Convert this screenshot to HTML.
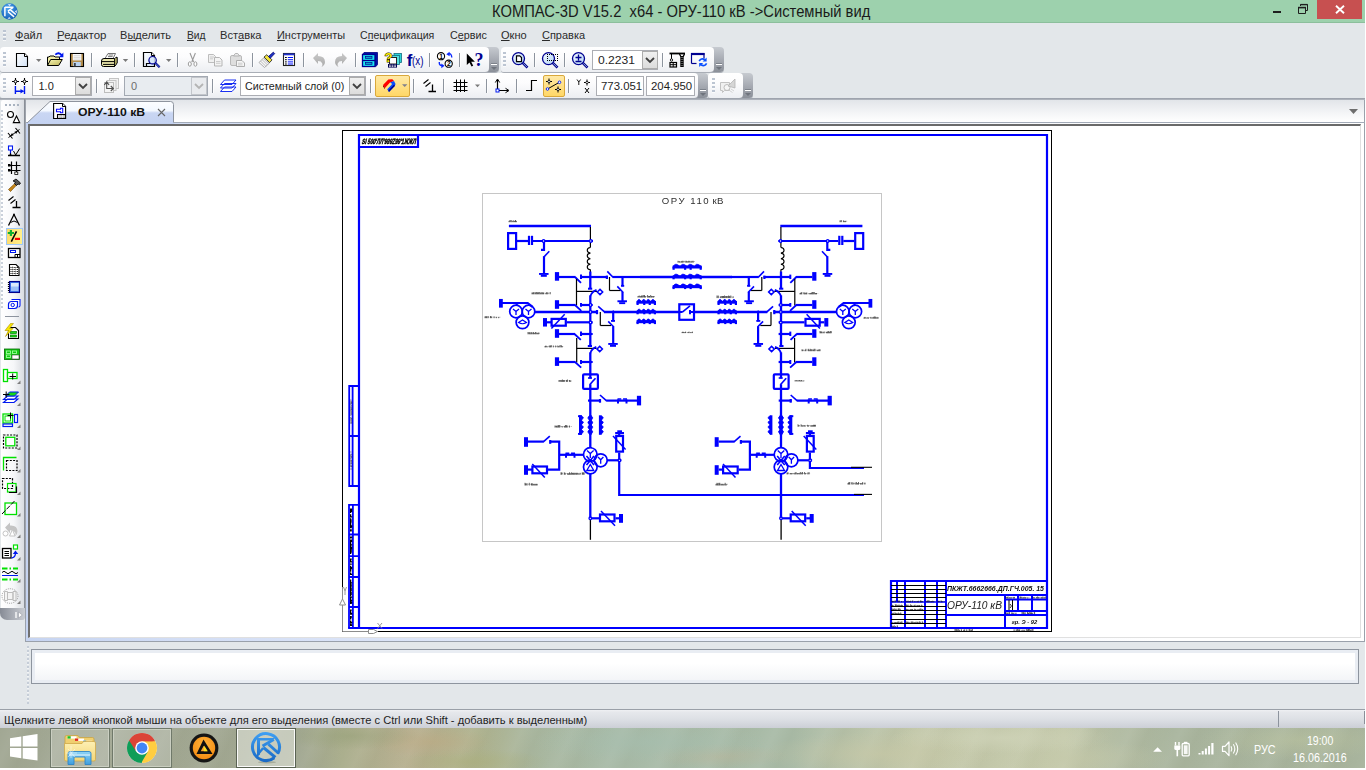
<!DOCTYPE html>
<html lang="ru">
<head>
<meta charset="utf-8">
<title>КОМПАС-3D V15.2 x64 - ОРУ-110 кВ</title>
<style>
*{box-sizing:border-box;margin:0;padding:0}
html,body{width:1366px;height:770px;overflow:hidden;background:#fff}
body{font-family:"Liberation Sans",sans-serif;font-size:12px;color:#1e1e1e;position:relative}
.abs{position:absolute}
#app{position:absolute;left:0;top:0;width:1365px;height:728px;background:#e3e7ea;overflow:hidden}
#titlebar{position:absolute;left:0;top:0;width:1366px;height:23px;background:#9dd1ad;border-bottom:1px solid #8cbf9c}
#title{position:absolute;left:492.300px;top:3px;font-size:15.6px;color:#1a1a1a;white-space:pre;transform-origin:0 50%;transform:scaleX(0.946)}
#closebtn{position:absolute;left:1317px;top:0;width:45px;height:19px;background:#c75050}
#menubar{position:absolute;left:0;top:23px;width:1366px;height:24px}
#menubar span{position:absolute;top:5.600px;font-size:11.300px;color:#2b2b2b;white-space:nowrap;transform-origin:0 50%}
.sx{display:inline-block;transform-origin:0 50%;white-space:pre}
#menubar u{text-decoration:underline;text-underline-offset:1px}
.grip{position:absolute;width:3px;background-image:repeating-linear-gradient(to bottom,#bcc5d2 0,#bcc5d2 2px,rgba(255,255,255,.7) 2px,rgba(255,255,255,.7) 3px,transparent 3px,transparent 4px)}
.tbpanel{position:absolute;height:25px;background:linear-gradient(#ffffff 0%,#fcfcfd 40%,#eceef2 100%);border-radius:4px 4px 4px 3px;box-shadow:0 1px 0 #a9aeb6}
.tbend{position:absolute;width:15px;height:25px;background:linear-gradient(#c6cad0,#a4a8b0 55%,#8b9099);border-radius:0 4px 4px 0;box-shadow:0 1px 0 #a9aeb6}
.tbend:after{content:"";position:absolute;left:7px;top:17px;width:6px;height:1px;background:#fff;box-shadow:0 -1px 0 #7d828b}
.tbend:before{content:"";position:absolute;left:7px;top:19.500px;border-left:3px solid transparent;border-right:3px solid transparent;border-top:3px solid #6f747d}
.sep{position:absolute;width:1px;height:14px;margin-top:1px;background:#8d949e;box-shadow:1px 0 0 rgba(255,255,255,.8)}
.combo{position:absolute;height:20px;background:#fff;border:1px solid #abadb3;font-size:11px;line-height:18px;padding-left:6px;color:#1e1e1e;white-space:nowrap;overflow:hidden}
.combo.dis{background:#e8ecf0;border-color:#a3a9b2;color:#6d6d6d}
.cbtn{position:absolute;width:16px;height:18px;background:linear-gradient(#f0f0f0,#dcdcdc);border:1px solid #acacac}
.cbtn.dis{background:#e9ebee;border-color:#c3c6cb}
.cbtn svg{position:absolute;left:2px;top:5px}
.hot{position:absolute;background:linear-gradient(#ffe9a6,#ffd767);border:1px solid #d9a83c;border-radius:2px}
.ico{position:absolute;overflow:visible}
</style>
</head>
<body>
<div id="app">
<!-- ===== title bar ===== -->
<div id="titlebar">
  <svg class="ico" style="left:0.500px;top:2.500px" width="17" height="17" viewBox="-8.500 -8.500 17 17">
    <defs><radialGradient id="kg" cx="40%" cy="30%" r="75%"><stop offset="0" stop-color="#4fa6f0"/><stop offset="1" stop-color="#125cb4"/></radialGradient></defs>
    <circle r="8.200" fill="url(#kg)"/>
    <path d="M-4.600 -4.500V4.800M-4.600 -4.300H4M3.600 -4L-1.600 -.400M-1.400 .200L4.600 5.400M1 -1.600L6.300 3" stroke="#fff" stroke-width="1.500" fill="none"/>
    <path d="M-1.800 -7.300L0 -5.600 1.800 -7.300zM7.300 -1.500L5.300 0 7.300 1.800zM-2 7.200L-.300 5.400 1.400 7.200z" fill="#fff" opacity=".85"/>
  </svg>
  <div id="title">КОМПАС-3D V15.2  x64 - ОРУ-110 кВ -&gt;Системный вид</div>
  <div class="abs" style="left:1273px;top:11px;width:8px;height:2px;background:#1e1e1e"></div>
  <svg class="ico" style="left:1297px;top:3px" width="12" height="12" viewBox="0 0 12 12"><path d="M1.5 4.5h7v6h-7z" fill="none" stroke="#1e1e1e" stroke-width="1"/><path d="M1 4.6h8" stroke="#1e1e1e" stroke-width="1.6"/><path d="M3.5 3V1.5h7v6H9" fill="none" stroke="#1e1e1e" stroke-width="1"/><path d="M3.5 1.6h7" stroke="#1e1e1e" stroke-width="1.4"/></svg>
  <div id="closebtn"><svg class="ico" style="left:18px;top:5px" width="10" height="9" viewBox="0 0 10 9"><path d="M1 .8l8 7.4M9 .8L1 8.2" stroke="#fff" stroke-width="1.9"/></svg></div>
</div>

<!-- ===== menu bar ===== -->
<div id="menubar">
  <div class="grip" style="left:3px;top:7px;height:12px"></div>
  <span style="left:15.3px;transform:scaleX(0.977)"><u>Ф</u>айл</span>
  <span style="left:56.8px;transform:scaleX(1.016)"><u>Р</u>едактор</span>
  <span style="left:120.3px;transform:scaleX(0.978)">В<u>ы</u>делить</span>
  <span style="left:186.8px;transform:scaleX(0.910)"><u>В</u>ид</span>
  <span style="left:220.3px;transform:scaleX(0.987)">Вст<u>а</u>вка</span>
  <span style="left:276.8px;transform:scaleX(0.968)"><u>И</u>нструменты</span>
  <span style="left:359.8px;transform:scaleX(0.937)">С<u>п</u>ецификация</span>
  <span style="left:449.8px;transform:scaleX(0.952)">С<u>е</u>рвис</span>
  <span style="left:500.8px;transform:scaleX(0.979)"><u>О</u>кно</span>
  <span style="left:541.8px;transform:scaleX(0.971)"><u>С</u>правка</span>
</div>

<!-- ===== toolbar row 1 ===== -->
<div class="tbend" style="left:484px;top:47px"></div>
<div class="tbpanel" style="left:0px;top:47px;width:489px"></div>
<div class="tbend" style="left:709px;top:47px"></div>
<div class="tbpanel" style="left:500.500px;top:47px;width:213.500px"></div>
<div class="grip" style="left:3px;top:52px;height:16px"></div>
<div class="grip" style="left:503px;top:52px;height:16px"></div>

<!-- ===== toolbar row 2 ===== -->
<div class="tbend" style="left:693px;top:73px"></div>
<div class="tbpanel" style="left:0px;top:73px;width:698px"></div>
<div class="tbend" style="left:738px;top:73px"></div>
<div class="tbpanel" style="left:708.300px;top:73px;width:34.700px"></div>
<div class="grip" style="left:3px;top:78px;height:16px"></div>
<div class="grip" style="left:711.500px;top:78px;height:16px"></div>

<!-- separators row 1 -->
<div class="sep" style="left:91px;top:52px"></div>
<div class="sep" style="left:134px;top:52px"></div>
<div class="sep" style="left:177px;top:52px"></div>
<div class="sep" style="left:252px;top:52px"></div>
<div class="sep" style="left:303px;top:52px"></div>
<div class="sep" style="left:355px;top:52px"></div>
<div class="sep" style="left:429px;top:52px"></div>
<div class="sep" style="left:459px;top:52px"></div>
<div class="sep" style="left:534px;top:52px"></div>
<div class="sep" style="left:564px;top:52px"></div>
<div class="sep" style="left:662px;top:52px"></div>
<!-- separators row 2 -->
<div class="sep" style="left:96px;top:78px"></div>
<div class="sep" style="left:212px;top:78px"></div>
<div class="sep" style="left:370px;top:78px"></div>
<div class="sep" style="left:413px;top:78px"></div>
<div class="sep" style="left:443px;top:78px"></div>
<div class="sep" style="left:486px;top:78px"></div>
<div class="sep" style="left:516px;top:78px"></div>
<div class="sep" style="left:568px;top:78px"></div>

<!-- combos -->
<div class="combo" style="left:592px;top:50px;width:66px;padding-left:4.500px"><span class="sx" style="transform:scaleX(1.1)">0.2231</span></div>
<div class="cbtn" style="left:642px;top:51px"><svg width="10" height="7" viewBox="0 0 10 7"><path d="M1 1l4 4 4-4" fill="none" stroke="#404040" stroke-width="1.8"/></svg></div>
<div class="combo" style="left:32px;top:76px;width:60px;padding-left:5.500px"><span class="sx" style="transform:scaleX(1.0)">1.0</span></div>
<div class="cbtn" style="left:75px;top:77px"><svg width="10" height="7" viewBox="0 0 10 7"><path d="M1 1l4 4 4-4" fill="none" stroke="#404040" stroke-width="1.8"/></svg></div>
<div class="combo dis" style="left:124px;top:76px;width:84px">0</div>
<div class="cbtn dis" style="left:191px;top:77px"><svg width="10" height="7" viewBox="0 0 10 7"><path d="M1 1l4 4 4-4" fill="none" stroke="#b4b4b4" stroke-width="1.8"/></svg></div>
<div class="combo" style="left:240px;top:76px;width:126px;padding-left:4px"><span class="sx" style="transform:scaleX(.972)">Системный слой (0)</span></div>
<div class="cbtn" style="left:349px;top:77px"><svg width="10" height="7" viewBox="0 0 10 7"><path d="M1 1l4 4 4-4" fill="none" stroke="#404040" stroke-width="1.8"/></svg></div>
<div class="combo" style="left:596px;top:76px;width:48px;padding-left:4.200px"><span class="sx" style="transform:scaleX(1.035)">773.051</span></div>
<div class="combo" style="left:646px;top:76px;width:48.500px;padding-left:4.200px"><span class="sx" style="transform:scaleX(1.035)">204.950</span></div>
<!-- hot buttons -->
<div class="hot" style="left:375px;top:75px;width:35px;height:22px"></div>
<div class="hot" style="left:543px;top:75px;width:22px;height:22px"></div>

<!-- ===== tab strip ===== -->
<div class="abs" style="left:0;top:98px;width:1366px;height:2px;background:linear-gradient(#979da7,#b4b9c1)"></div>
<div class="abs" style="left:26px;top:100px;width:1339px;height:22px;background:linear-gradient(#e2e5e9,#f3f4f6 55%,#ffffff);border-right:1px solid #9aa1ab"></div>
<!-- ===== document area ===== -->
<div class="abs" style="left:26px;top:122px;width:1339px;height:520px;background:linear-gradient(to right,#c6d4f1 0%,#d3def5 12%,#e2e9f9 40%,#ffffff 85%);border-top:1px solid #a3abb8;border-right:1px solid #9aa1ab;border-bottom:1px solid #9aa1ab"></div>
<div class="abs" style="left:28px;top:124px;width:1333px;height:514px;background:#fff;border-top:2px solid #6a6a6a;border-left:2px solid #707070;border-right:1px solid #e0e0e0;border-bottom:1px solid #e0e0e0"></div>
<svg class="ico" style="left:26px;top:99px" width="160" height="26" viewBox="0 0 160 26">
  <defs><linearGradient id="tabg" x1="0" y1="2" x2="0" y2="25" gradientUnits="userSpaceOnUse"><stop offset="0" stop-color="#fdfeff"/><stop offset=".42" stop-color="#f3f8ff"/><stop offset=".52" stop-color="#c9d6f3"/><stop offset="1" stop-color="#c4d2f1"/></linearGradient></defs>
  <path d="M-.500 25L1 24L24 2.500H144.500Q147.500 2.500 147.500 5.500V23.500L149 25z" fill="url(#tabg)"/>
  <path d="M1 24L24 2.500H144.500Q147.500 2.500 147.500 5.500V23.500" fill="none" stroke="#8e949e" stroke-width="1"/>
</svg>
<svg class="ico" style="left:52px;top:102px" width="16" height="18" viewBox="52 102 16 18">
  <path d="M53.600 103.500h9l3 3v12h-12z" fill="#fff" stroke="#000" stroke-width="1.100"/>
  <path d="M62.500 103.500v3h3" fill="#fff" stroke="#000" stroke-width="1"/>
  <path d="M56.500 109.300h4v-1h2.200v4.400h-2.200v-1h-4z" fill="#fff" stroke="#0a0aff" stroke-width="1.100"/>
  <path d="M57.500 118.500v-4h8" fill="none" stroke="#000" stroke-width="1.100"/>
  <path d="M58.500 115.800h6.500M58.500 117.300h6.500" stroke="#8a8a8a" stroke-width=".900" stroke-dasharray="1.200 .500 2.300 .500 2.300"/>
</svg>
<div class="abs sx" style="left:78.300px;top:105.500px;font-size:11px;font-weight:bold;color:#111;transform:scaleX(1.11)">ОРУ-110 кВ</div>
<svg class="ico" style="left:157px;top:108px" width="9" height="9" viewBox="0 0 9 9"><path d="M1 1l7 7M8 1L1 8" stroke="#666" stroke-width="1.100"/></svg>
<svg class="ico" style="left:1349px;top:109px" width="10" height="6" viewBox="0 0 10 6"><path d="M0 0h9L4.500 5z" fill="#6e6e6e"/></svg>

<!-- ===== left toolbar ===== -->
<div class="abs" style="left:1px;top:100px;width:23px;height:520px;background:linear-gradient(to right,#ffffff 0%,#f6f7f9 55%,#d9dce1 100%);border-radius:2px 0 0 6px"></div>
<div class="abs" style="left:0;top:607.500px;width:24.500px;height:12px;background:linear-gradient(to right,#868b95,#a9adb5 50%,#c9ccd2);border-radius:0 0 3px 7px"></div>
<svg class="ico" style="left:14.500px;top:611.500px" width="8" height="6" viewBox="0 0 8 6"><path d="M1 0v6" stroke="#fff" stroke-width="1.300"/><path d="M3.500 0L7.300 3 3.500 6z" fill="#fff" stroke="#8a8f98" stroke-width=".500"/></svg>
<div class="abs" style="left:24px;top:99px;width:2px;height:509px;background:linear-gradient(to right,#7f848d,#a9aeb6)"></div>
<div class="abs" style="left:25px;top:608px;width:1px;height:34px;background:#9aa1ab"></div>
<div class="abs" style="left:5px;top:104px;width:16px;height:2px;background-image:repeating-linear-gradient(to right,#a9b3c0 0,#a9b3c0 2px,transparent 2px,transparent 4px)"></div>
<div class="grip" style="left:1px;top:110px;width:2px;height:200px;opacity:.8"></div>
<div class="abs" style="left:6px;top:228px;width:17px;height:17px;background:linear-gradient(to right,#ffdc6c,#fff08c);border:1px solid #9ec8f8"></div>
<div class="abs" style="left:5px;top:316px;width:14px;height:1px;background:#8d949e"></div>

<!-- ===== bottom panel ===== -->
<div class="grip" style="left:26.500px;top:646px;width:2.500px;height:58px;opacity:.75"></div>
<div class="abs" style="left:31px;top:649px;width:1328px;height:35px;background:linear-gradient(#ffffff 0%,#ffffff 40%,#f1f3f6 100%);border:1px solid #8e959f;box-shadow:inset 0 0 0 3px #e9edf3"></div>
<!-- ===== status bar ===== -->
<div class="abs" style="left:0;top:709px;width:1366px;height:1px;background:#9aa0a8"></div>
<div class="abs" style="left:0;top:710px;width:1366px;height:18px;background:linear-gradient(#eff0f3 0%,#e6e8ec 12%,#dde0e5 50%,#cccfd6 100%)"></div>
<div class="abs" style="left:1363.500px;top:711px;width:1px;height:13px;background:#8a8f98"></div>
<div class="abs sx" style="left:3.800px;top:714px;font-size:11px;color:#1e1e1e;transform:scaleX(1.011)">Щелкните левой кнопкой мыши на объекте для его выделения (вместе с Ctrl или Shift - добавить к выделенным)</div>
<div class="abs" style="left:1278px;top:711px;width:1px;height:16px;background:#8d949e"></div>
<!-- ===== toolbar icons (page coordinates) ===== -->
<svg class="ico" style="left:0;top:0" width="760" height="100" viewBox="0 0 760 100">
<defs>
  <linearGradient id="gdoc" x1="0" y1="0" x2="1" y2="1"><stop offset="0" stop-color="#ffffff"/><stop offset="1" stop-color="#d3e2f6"/></linearGradient>
  <linearGradient id="gfold" x1="0" y1="0" x2="1" y2="1"><stop offset="0" stop-color="#fbf9b8"/><stop offset="1" stop-color="#b9b055"/></linearGradient>
  <linearGradient id="glens" x1="0" y1="0" x2="1" y2="1"><stop offset="0" stop-color="#f4faff"/><stop offset="1" stop-color="#b4d6f6"/></linearGradient>
  <linearGradient id="ggray" x1="0" y1="0" x2="0" y2="1"><stop offset="0" stop-color="#c9c9c9"/><stop offset="1" stop-color="#a9a9a9"/></linearGradient>
</defs>
<!-- new document -->
<path d="M16.5 53.5h8l3 3v10h-11z" fill="url(#gdoc)" stroke="#000" stroke-width="1.1"/>
<path d="M24.5 53.5v3h3" fill="#fff" stroke="#000" stroke-width="1"/>
<path d="M36 59h5.4l-2.7 3z" fill="#7a7a7a"/>
<!-- open -->
<path d="M47.5 65.5v-8.5h1.5l1-1h4l1 1h4.5v2.5" fill="#f3efa6" stroke="#000" stroke-width="1"/>
<path d="M47.5 65.5l3.2-6h11.6l-3.6 6z" fill="url(#gfold)" stroke="#000" stroke-width="1"/>
<path d="M55.3 54.6q3.6-3 6.4.6" fill="none" stroke="#0018f0" stroke-width="1.8"/>
<path d="M63.4 52.6v4.6h-4.6z" fill="#0018f0"/>
<!-- save -->
<rect x="70.5" y="53.5" width="13" height="13" fill="#b38d4c" stroke="#000" stroke-width="1.1"/>
<rect x="72.8" y="54" width="8.6" height="6.4" fill="#fbfbfb"/>
<path d="M73.6 55.7h7M73.6 57.4h7M73.6 59.1h7" stroke="#c9c9c9" stroke-width=".7"/>
<rect x="73.2" y="62" width="7.6" height="4.2" fill="#b9d2f0"/>
<rect x="74.2" y="63" width="1.4" height="3" fill="#222"/>
<!-- print -->
<path d="M105 58.5l3-5h7.5l-2.5 5z" fill="#fff" stroke="#666" stroke-width=".9"/>
<path d="M108.6 55h4.6M108 56.6h4.6" stroke="#555" stroke-width=".8"/>
<path d="M101.5 61q0-2.5 2.5-2.5h10.5l2.5-1.5v6l-2.5 3.5h-11q-2 0-2-2z" fill="#e9e6ac" stroke="#000" stroke-width="1"/>
<path d="M114.5 58.6v8M117 57.5v5.5l-2.5 3.5" fill="none" stroke="#000" stroke-width=".9"/>
<path d="M101.8 61.6h12.6M103 64.4h11.4" stroke="#000" stroke-width="1"/>
<path d="M115 59l1.7-1v5l-1.7 2.5z" fill="#a9a560"/>
<path d="M122.8 59h5.4l-2.7 3z" fill="#7a7a7a"/>
<!-- preview -->
<path d="M143.5 52.5h8l3 3v11h-11z" fill="url(#gdoc)" stroke="#000" stroke-width="1.2"/>
<path d="M151.5 52.5v3h3" fill="#fff" stroke="#000" stroke-width="1"/>
<path d="M146.5 66.5v-3h4" fill="none" stroke="#000" stroke-width="1.2"/>
<circle cx="152.6" cy="60.2" r="3.7" fill="#d8e9fb" fill-opacity=".85" stroke="#000090" stroke-width="1.2"/>
<path d="M155.4 63l4.2 4.2" stroke="#000090" stroke-width="2.2"/>
<path d="M155.8 63.4l3.6 3.6" stroke="#6fa0e6" stroke-width=".8"/>
<path d="M166 59h5.4l-2.7 3z" fill="#7a7a7a"/>
<!-- cut (disabled) -->
<path d="M190 53l3.6 9M195.4 53l-3.6 9" stroke="#9b9b9b" stroke-width="1.1" fill="none"/>
<ellipse cx="189.8" cy="64" rx="1.5" ry="2.2" fill="#fff" stroke="#9b9b9b" stroke-width="1"/>
<ellipse cx="195.4" cy="64" rx="1.5" ry="2.2" fill="#fff" stroke="#9b9b9b" stroke-width="1"/>
<!-- copy (disabled) -->
<path d="M208.5 54.5h5l2 2v6h-7z" fill="#f0f0f0" stroke="#bdbdbd" stroke-width="1"/>
<path d="M214.5 57.5h5l2.5 2.5v6h-7.5z" fill="#f4f4f4" stroke="#b5b5b5" stroke-width="1"/>
<path d="M210 57h4M210 58.8h3M216 61.5h4.5M216 63.3h4.5" stroke="#c2c2c2" stroke-width=".8"/>
<!-- paste (disabled) -->
<rect x="230.5" y="55.5" width="11" height="10" rx="1.5" fill="#dedede" stroke="#b9b9b9" stroke-width="1"/>
<path d="M233.500 56l1.800-2.500h2.400l1.800 2.500z" fill="#ececec" stroke="#adadad" stroke-width=".9"/>
<path d="M236.500 60.500h5.500l2.500 2.500v3.500h-8z" fill="#f6f6f6" stroke="#adadad" stroke-width="1"/>
<path d="M238 63.200h4.500M238 64.900h4.500" stroke="#c2c2c2" stroke-width=".8"/>
<!-- brush -->
<path d="M259 62.500l5-5 5.500 5.500-5 4.500z" fill="#f6f6f6" stroke="#9a9a9a" stroke-width=".8"/>
<path d="M260.500 61l5.500 5.500M262 59.500l5.500 5.500M263.200 58.300l5.500 5.500" stroke="#a8a8a8" stroke-width=".7"/>
<path d="M264 57l2.800-2.300 5.200 5.200-2.400 2.700z" fill="#f2e43c" stroke="#333" stroke-width=".9"/>
<path d="M268.500 56.500l4.800-4.300 1.400 1.400-4.500 4.700z" fill="#1d32c8" stroke="#00006a" stroke-width=".8"/>
<!-- properties list -->
<rect x="283.500" y="53.500" width="11" height="12" fill="#fff" stroke="#222" stroke-width="1.100"/>
<rect x="283.500" y="53.500" width="11" height="1.800" fill="#2233cc"/>
<path d="M287.800 57.500h5.200M287.800 59.700h5.200M287.800 61.900h5.200M287.800 64h5.200" stroke="#0010ff" stroke-width="1"/>
<path d="M285 57.500h1.800M285 59.700h1.800M285 61.900h1.800M285 64h1.800" stroke="#000" stroke-width="1"/>
<!-- undo / redo (disabled) -->
<path d="M313 58l5-5v3q7 0 7 6 0 3-3.500 5 1.500-2 .8-3.600-1-2.400-4.300-2.400v3z" fill="url(#ggray)"/>
<path d="M347 58l-5-5v3q-7 0-7 6 0 3 3.500 5-1.500-2-.8-3.600 1-2.400 4.300-2.400v3z" fill="url(#ggray)"/>
<!-- library manager -->
<path d="M362.500 54.500l1.500-2h13.500v12l-1.500 2z" fill="#0010a8" stroke="#000080" stroke-width=".8"/>
<rect x="362.500" y="54.500" width="12.500" height="12" fill="#1ce8f0" stroke="#000090" stroke-width="1.300"/>
<path d="M362.500 60.500h12.500" stroke="#000090" stroke-width="1.300"/>
<rect x="365.500" y="56.600" width="6.500" height="1.700" fill="#0aaad0" stroke="#000090" stroke-width=".7"/>
<rect x="365.500" y="62.600" width="6.500" height="1.700" fill="#0aaad0" stroke="#000090" stroke-width=".7"/>
<!-- help book -->
<rect x="394" y="53.500" width="7.500" height="9" fill="#2bd4d8" stroke="#146a80" stroke-width=".8"/>
<rect x="392" y="55.500" width="7.500" height="9" fill="#53e0e0" stroke="#146a80" stroke-width=".8"/>
<rect x="389.500" y="57.500" width="7" height="6.500" fill="#fff" stroke="#222" stroke-width="1"/>
<rect x="388" y="64" width="9" height="3.600" fill="#000050"/><path d="M389 65.200h7M389 66.600h7" stroke="#fff" stroke-width=".800" stroke-dasharray="1.800 .800"/>
<text x="384.600" y="62" font-family="Liberation Sans" font-weight="bold" font-size="13" fill="#f8ea00" stroke="#000" stroke-width=".900" paint-order="stroke">?</text>
<!-- f(x) -->
<text x="406.800" y="65.600" font-family="Liberation Sans" font-weight="bold" font-size="17" fill="#000090">f</text>
<text x="412" y="64.800" font-family="Liberation Sans" font-size="12.500" fill="#000090" textLength="11.500" lengthAdjust="spacingAndGlyphs">(x)</text>
<!-- numbering -->
<circle cx="441" cy="56.200" r="3.600" fill="#fff" stroke="#000" stroke-width="1.100"/>
<circle cx="448.700" cy="63.700" r="3.600" fill="#fff" stroke="#000" stroke-width="1.100"/>
<text x="439.300" y="58.700" font-family="Liberation Sans" font-size="6.800" font-weight="bold" fill="#000">1</text>
<text x="446.900" y="66.200" font-family="Liberation Sans" font-size="6.800" font-weight="bold" fill="#000">2</text>
<path d="M448.500 54q3-1 3.300 3.500" fill="none" stroke="#0a28ff" stroke-width="1.400"/>
<path d="M446.300 54.300l3.300-2.600v4.600z" fill="#0a28ff"/>
<path d="M439.300 62q-.300 3.800 3 3.600" fill="none" stroke="#0a28ff" stroke-width="1.400"/>
<path d="M444.600 65.800l-3.300 2.400v-4.600z" fill="#0a28ff"/>
<!-- context help -->
<path d="M466.800 53.500v11.500l2.700-2.600 2 4.200 1.700-.800-2-4.100h3.700z" fill="#000"/>
<text x="474.600" y="66" font-family="Liberation Serif" font-weight="bold" font-size="18" fill="#000090">?</text>

<!-- zoom icons -->
<g>
<path d="M522.500 62.600l5 5" stroke="#000090" stroke-width="2.600"/><path d="M523.200 63.300l4 4" stroke="#9fb9d8" stroke-width=".9"/>
<circle cx="518.500" cy="58.600" r="6" fill="url(#glens)" stroke="#000090" stroke-width="1.300"/>
<path d="M516.500 55.800h3.200l1.800 1.800v4h-5z" fill="#fff" stroke="#000" stroke-width="1.200"/>
</g>
<g>
<path d="M552.500 62.600l5 5" stroke="#000090" stroke-width="2.600"/><path d="M553.200 63.300l4 4" stroke="#9fb9d8" stroke-width=".9"/>
<circle cx="548.500" cy="58.600" r="6" fill="url(#glens)" stroke="#000090" stroke-width="1.300"/>
<path d="M547 54.500h11M547 60.500h11M547.500 54v7M557.500 54v7" fill="none" stroke="#000" stroke-width="1" stroke-dasharray="1 1" shape-rendering="crispEdges"/>
</g>
<g>
<path d="M582.500 62.600l5 5" stroke="#000090" stroke-width="2.600"/><path d="M583.200 63.300l4 4" stroke="#9fb9d8" stroke-width=".9"/>
<circle cx="578.500" cy="58.600" r="6" fill="url(#glens)" stroke="#000090" stroke-width="1.300"/>
<path d="M575.500 57.500h6M578.500 54.600v5.800M575.500 61.500h6" stroke="#000090" stroke-width="1.300"/>
</g>
<!-- crane / rebuild -->
<path d="M669.500 53.500h15.500" stroke="#000" stroke-width="1.800"/>
<path d="M671.500 54v5" stroke="#000" stroke-width="1"/>
<circle cx="671.500" cy="60" r="1.200" fill="#fff" stroke="#000" stroke-width=".9"/>
<rect x="670" y="62.500" width="6.500" height="4.500" fill="#fff" stroke="#000" stroke-width="1.200"/>
<path d="M670 64.700h6.500M673.200 62.500v4.500" stroke="#000" stroke-width="1"/>
<path d="M679.500 54l1.500 3v10M684.500 54l-1.500 3v10" stroke="#000" stroke-width="1.300" fill="none"/>
<path d="M682 56v11" stroke="#000" stroke-width="2.400" stroke-dasharray="1 1"/>
<!-- refresh window -->
<path d="M691.500 63.500v-10h12.500v5" fill="none" stroke="#000090" stroke-width="1.200"/>
<path d="M691 54h13.500" stroke="#000090" stroke-width="2.200"/>
<path d="M691.500 63.500h5" stroke="#000090" stroke-width="1.200"/>
<path d="M699.200 61.200q2-3.600 5.600-1.400" fill="none" stroke="#0a50ff" stroke-width="1.700"/>
<path d="M706.600 57.600v4h-4z" fill="#0a50ff"/>
<path d="M706.600 63.400q-2 3.600-5.600 1.400" fill="none" stroke="#0a50ff" stroke-width="1.700"/>
<path d="M699.200 67v-4h4z" fill="#0a50ff"/>

<!-- ========== row 2 ========== -->
<!-- step icon -->
<path d="M12 81.500h7M15.500 78v7M21 81.500h7M24.500 78v7" stroke="#000" stroke-width="1.100"/>
<circle cx="15.500" cy="81.500" r="1.400" fill="#fff" stroke="#000" stroke-width="1"/>
<circle cx="24.500" cy="81.500" r="1.400" fill="#fff" stroke="#000" stroke-width="1"/>
<path d="M15.400 86v8M24.500 86v8M15.400 91.300h8" stroke="#0018f0" stroke-width="1.400" fill="none"/>
<path d="M24 91.300l-3.500-2.300v4.600z" fill="#0018f0"/>
<!-- layer state (disabled) -->
<rect x="109.500" y="78.500" width="9" height="10" fill="#f2f2f2" stroke="#c4c4c4" stroke-width="1"/>
<rect x="107" y="80.500" width="9" height="10" fill="#f2f2f2" stroke="#c4c4c4" stroke-width="1"/>
<rect x="104.500" y="82.500" width="9" height="10" fill="#f4f4f4" stroke="#bdbdbd" stroke-width="1"/>
<path d="M104.300 85l2.400-3 2.400 3M106.700 82.500v6h6M110.800 86l2.600 2.500-2.600 2.500" fill="none" stroke="#505050" stroke-width="1.100"/>
<!-- layers -->
<path d="M220.500 84.500l4-4.500h11.500l-4 4.500zM220.500 88l4-4.500h11.500l-4 4.500zM220.500 91.500l4-4.500h11.500l-4 4.500z" fill="#fff" stroke="#0018f0" stroke-width=".900"/>
<!-- magnet -->
<path d="M383 85L388.300 79.500L392.300 79.300L394 81L390 82.500L385 88z" fill="#ff0000"/>
<path d="M383 85L385 88L385 89.200L383 86.600z" fill="#8a0000"/>
<path d="M394 81Q396.200 83.500 394.800 86L389 92L387.200 89.200L391.800 84.500Q392.300 83 390 82.500z" fill="#0a50ff"/>
<path d="M394.800 86L389 92L388.300 90.600L394.200 84.600z" fill="#00008a"/>
<path d="M402 84.200h5.400l-2.700 2.800z" fill="#80808c"/>
<!-- ortho -->
<path d="M423.500 83.500l5-4M425.500 86.500l5-4" stroke="#000" stroke-width="1.100"/>
<path d="M432.500 84.500v7M428.500 91.500h7.500" stroke="#000" stroke-width="1.300"/>
<!-- grid -->
<path d="M456.500 79.500v12.500M460.500 79.500v12.500M464.500 79.500v12.500M453.500 82.500h14M453.500 86.500h14M453.500 90.500h14" stroke="#000" stroke-width="1"/>
<path d="M475 84.500h5l-2.500 2.800z" fill="#7a7a7a"/>
<!-- LCS -->
<path d="M497.500 90.500v-10.500M497.500 90.500h10.500" stroke="#000" stroke-width="1.200"/>
<path d="M495.300 82.500l2.200-3.500 2.200 3.500M505.500 88.300l3.500 2.200-3.500 2.200" fill="none" stroke="#000" stroke-width="1"/>
<rect x="496" y="89" width="3" height="3" fill="#fff" stroke="#0018f0" stroke-width="1"/>
<!-- step polyline -->
<path d="M526 90.500h5.500v-10h5.500" fill="none" stroke="#000" stroke-width="1.200"/>
<!-- snap hot -->
<path d="M547.500 89l11.500-6.500" stroke="#000" stroke-width="1"/>
<path d="M546 81.500h6M549 78.500v6M555 89.500h6M558 86.500v6" stroke="#000" stroke-width="1"/>
<circle cx="549" cy="81.500" r="1.200" fill="#fff" stroke="#000" stroke-width=".8"/>
<circle cx="558" cy="89.500" r="1.200" fill="#fff" stroke="#000" stroke-width=".8"/>
<circle cx="547.500" cy="89" r="1.300" fill="#fff" stroke="#0018f0" stroke-width=".9"/>
<circle cx="559.500" cy="82.300" r="1.300" fill="#fff" stroke="#0018f0" stroke-width=".9"/>
<!-- Y/X -->
<path d="M577 79.500l1.800 2.500 1.800-2.500M578.800 82v3" fill="none" stroke="#000" stroke-width=".9"/>
<path d="M584 82.500h6M587 79.500v6" stroke="#000" stroke-width="1"/>
<circle cx="587" cy="82.500" r="1.200" fill="#fff" stroke="#000" stroke-width=".8"/>
<path d="M585 88l4 5M589 88l-4 5" stroke="#000" stroke-width="1"/>
<!-- last small panel icon (disabled) -->
<path d="M720.500 82.500h9v8h-5l-2 2v-2h-2z" fill="#f0f0f0" stroke="#c2c2c2" stroke-width="1"/>
<circle cx="727" cy="87.500" r="3" fill="#f6f6f6" stroke="#bdbdbd" stroke-width="1"/>
<path d="M728 86l7-7v9z" fill="#d6d6d6" stroke="#b4b4b4" stroke-width=".8"/>
<path d="M729.500 90.500l3 2M731 89l3 2" stroke="#c9c9c9" stroke-width=".8"/>
</svg>
<!-- ===== left toolbar icons (page coordinates) ===== -->
<svg class="ico" style="left:0;top:100px" width="26" height="520" viewBox="0 100 26 520">
<defs>
  <path id="cm" d="M0 0h3v3z" fill="#7d7d7d" transform="rotate(90 1.500 1.500)"/>
</defs>
<!-- 1 geometry -->
<circle cx="10.500" cy="114.500" r="3" fill="#fff" stroke="#000" stroke-width="1.100"/>
<path d="M16.500 116l3.200 6.600h-6.400z" fill="#fff" stroke="#000" stroke-width="1.100"/>
<!-- 2 dimension -->
<path d="M8.500 137.500l11-8" stroke="#000" stroke-width="1"/>
<path d="M8 133l4.500 5.500M15.500 128l4.500 5.500" stroke="#000" stroke-width="1.100"/>
<path d="M10.200 136.300l3.400-1-1.600-2.200zM17.900 130.700l-3.400 1 1.600 2.200z" fill="#000"/>
<!-- 3 designation -->
<rect x="8.500" y="146" width="4" height="4" fill="#fff" stroke="#0018f0" stroke-width="1.100"/>
<path d="M10.500 150v4.500" stroke="#0018f0" stroke-width="1.200"/>
<path d="M8 155.500h12" stroke="#000" stroke-width="1.500"/>
<path d="M9.500 155l1-2.500 1 2.500z" fill="#000"/>
<path d="M13.500 151l2.200 4 4-6.500" fill="none" stroke="#000" stroke-width="1"/>
<!-- 4 grid/hash -->
<path d="M11.500 161.500v12.500M16.500 161.500v12.500M8 165.500h12.500M8 170.500h12.500" stroke="#000" stroke-width="1.200"/>
<rect x="8" y="164" width="2.500" height="2.500" fill="#000"/><rect x="8" y="169" width="2.500" height="2.500" fill="#000"/>
<rect x="14.800" y="172" width="3" height="2.500" fill="#fff" stroke="#000" stroke-width=".8"/>
<!-- 5 hammer -->
<path d="M8.500 189.500l7-6.500 1.500 1.500-6.500 7z" fill="#c88718" stroke="#7a4a00" stroke-width=".7"/>
<path d="M13 181l3-2 4.500 4-1 1.500-1.500-.5-1.500 1.500-2-2 1-1.500z" fill="#555" stroke="#000" stroke-width=".8"/>
<!-- 6 ortho -->
<path d="M8.500 200.500l5-4M10.500 203.500l5-4" stroke="#000" stroke-width="1.100"/>
<path d="M16.500 201v6.500M12.500 207.500h8" stroke="#000" stroke-width="1.300"/>
<!-- 7 compass -->
<path d="M14 214.500l-5.500 11M14 214.500l5.500 11" stroke="#000" stroke-width="1.300" fill="none"/>
<path d="M10.500 222.500q3.500-3 7 0" fill="none" stroke="#000" stroke-width="1"/>
<circle cx="14" cy="214.500" r=".9" fill="#000"/>
<!-- 8 +/- (hot) -->
<path d="M11.300 241.600l5.200-10.300" stroke="#000" stroke-width="1.500"/>
<path d="M7.800 233h6.200M10.900 230v6" stroke="#10b030" stroke-width="2.200"/>
<path d="M14.900 238.900h5.100" stroke="#ff0000" stroke-width="2.200"/>
<!-- 9 spec block -->
<rect x="8.500" y="248.500" width="11.500" height="9" fill="#fff" stroke="#000" stroke-width="1.300"/>
<rect x="10.500" y="250.500" width="5" height="2" fill="#fff" stroke="#0018f0" stroke-width="1"/>
<path d="M15 257.500v-3h5M17.500 254.500v3" stroke="#000" stroke-width="1" fill="none"/>
<!-- 10 report -->
<path d="M9.500 264.500h6.500l3 3v8h-9.500z" fill="#fff" stroke="#000" stroke-width="1.100"/>
<path d="M10.500 267.500h8M10.500 269.500h8M10.500 271.500h8M10.500 273.500h8" stroke="#000" stroke-width="1" stroke-dasharray="1 .6"/>
<path d="M12.500 266v9M15.500 267v8" stroke="#999" stroke-width=".5"/>
<!-- 11 blue book -->
<rect x="9.500" y="281.500" width="10" height="11" fill="#3a6ee8" stroke="#00008a" stroke-width="1.100"/>
<rect x="11" y="283" width="7.500" height="8" fill="#9cc0f8"/>
<rect x="11" y="283" width="7.500" height="3.500" fill="#dce9fc"/>
<path d="M8.500 282v10.500" stroke="#000" stroke-width="1.200" stroke-dasharray="1 1"/>
<!-- 12 views -->
<path d="M11.500 299.500h8.500v6q0 1.500-1.500 1.500" fill="#fff" stroke="#0018f0" stroke-width="1.100"/>
<path d="M8.500 304.500q0-3 3-3h6v4q0 3-3 3h-6z" fill="#fff" stroke="#0018f0" stroke-width="1.200"/>
<circle cx="12.700" cy="305" r="1.700" fill="#fff" stroke="#0018f0" stroke-width="1"/>
<!-- 13 lightning + doc -->
<path d="M8.500 327.500h7l3 3v8h-10z" fill="#fff" stroke="#000" stroke-width="1.100"/>
<rect x="10.500" y="331.500" width="6" height="2" fill="#18d818" stroke="#008000" stroke-width=".7"/>
<rect x="10.500" y="335" width="6" height="2" fill="#18d818" stroke="#008000" stroke-width=".7"/>
<path d="M10.500 323.500l-5.500 7h3.500l-3 6 7.500-8h-3.500l4-5z" fill="#f8e800" stroke="#b09000" stroke-width=".6"/>
<!-- 14 green panel -->
<rect x="4.500" y="349" width="15" height="10.500" fill="#14c814" stroke="#006800" stroke-width=".8"/>
<rect x="6.500" y="351" width="4" height="2.500" fill="none" stroke="#9cff9c" stroke-width=".9"/>
<rect x="12.500" y="351" width="4" height="2.500" fill="none" stroke="#9cff9c" stroke-width=".9"/>
<rect x="6.500" y="355" width="4" height="2.500" fill="none" stroke="#9cff9c" stroke-width=".9"/>
<rect x="12" y="355" width="7" height="4" fill="#fff" stroke="#444" stroke-width=".6"/>
<!-- 15 -->
<rect x="3.500" y="369.500" width="4" height="12" fill="#fff" stroke="#00e000" stroke-width="1.300"/>
<rect x="7.500" y="372.500" width="9.500" height="6" fill="#fff" stroke="#00e000" stroke-width="1.300"/>
<path d="M9.500 376.500h6.500M12.700 373.500v6" stroke="#000" stroke-width="1"/>
<path d="M17 384h3.500v-3.500z" fill="#7d7d7d"/>
<!-- 16 -->
<path d="M3.500 399.500l4-3.500h10.500l-4 3.500zM3.500 402.500l4-3.500h10.500l-4 3.500z" fill="#fff" stroke="#0018f0" stroke-width="1.100"/>
<path d="M5.500 396l4-4h9l-4 4z" fill="#18d818" stroke="#0018f0" stroke-width="1"/>
<path d="M3 394.500h6.500M6.200 391.500v6" stroke="#000" stroke-width="1"/>
<path d="M17 406h3.500v-3.500z" fill="#7d7d7d"/>
<!-- 17 -->
<rect x="3" y="414" width="9.500" height="9" fill="#fff" stroke="#00e000" stroke-width="1.300"/>
<rect x="5" y="416" width="5.500" height="5" fill="#fff" stroke="#00e000" stroke-width="1"/>
<rect x="14.500" y="414.500" width="3" height="8" fill="#fff" stroke="#0018f0" stroke-width="1.200"/>
<rect x="3" y="424" width="9.500" height="2.500" fill="#fff" stroke="#0018f0" stroke-width="1.200"/>
<path d="M7.500 415.500h6M10.500 412.500v6" stroke="#000" stroke-width="1"/>
<path d="M17 428h3.500v-3.500z" fill="#7d7d7d"/>
<!-- 18 -->
<rect x="3.500" y="435" width="13.500" height="13" fill="none" stroke="#000" stroke-width="1.200" stroke-dasharray="2 1.300"/>
<rect x="5.800" y="437.300" width="9" height="8.500" fill="#fff" stroke="#00e000" stroke-width="1.300"/>
<path d="M17 450h3.500v-3.500z" fill="#7d7d7d"/>
<!-- 19 -->
<path d="M3.500 470.500v-13h13" fill="none" stroke="#00e000" stroke-width="1.300"/>
<rect x="6.500" y="460.500" width="10.500" height="10" fill="none" stroke="#000" stroke-width="1.200" stroke-dasharray="2 1.300"/>
<path d="M17 472.500h3.500v-3.500z" fill="#7d7d7d"/>
<!-- 20 -->
<rect x="2.500" y="478.500" width="10" height="10" fill="none" stroke="#000" stroke-width="1.200" stroke-dasharray="2 1.300"/>
<rect x="7.500" y="483.500" width="8.500" height="8.500" fill="none" stroke="#00e000" stroke-width="1.200"/>
<path d="M9 492.500h7.500v-6" fill="none" stroke="#000" stroke-width="1.200"/>
<path d="M17 495h3.500v-3.500z" fill="#7d7d7d"/>
<!-- 21 -->
<rect x="5" y="503" width="11.500" height="11.500" fill="#fff" stroke="#00e000" stroke-width="1.300"/>
<path d="M2 514l13.500-14" stroke="#000" stroke-width="1" stroke-dasharray="5 1.500"/>
<path d="M17 516.500h3.500v-3.500z" fill="#7d7d7d"/>
<!-- 22 undo gray -->
<path d="M5 527.500l5-5v3q7.500-.5 7.500 6 0 3-2.500 5 1-2 .3-3.700-1.300-2.800-5.300-2.500v3z" fill="#c4c4c4"/>
<circle cx="5.500" cy="533.500" r="2.500" fill="#fff" stroke="#c4c4c4" stroke-width="1"/>
<path d="M12.500 529.500l2.500 6.500h-5.500z" fill="#fff" stroke="#c4c4c4" stroke-width="1"/>
<path d="M17 538h3.500v-3.500z" fill="#7d7d7d"/>
<!-- 23 -->
<rect x="2.500" y="548.500" width="8.500" height="9.500" fill="#fff" stroke="#000" stroke-width="1.300"/>
<path d="M4.500 551.500h4.500M4.500 553.500h4.500M4.500 555.500h4.500" stroke="#000" stroke-width="1"/>
<rect x="13.500" y="545" width="4" height="4" fill="#fff" stroke="#00e000" stroke-width="1.200"/>
<path d="M11.500 558q4-.500 4-5" fill="none" stroke="#0018f0" stroke-width="1.300"/>
<path d="M15.500 550.500l-2.700 3.500h5.400z" fill="#0018f0"/>
<path d="M17 560.500h3.500v-3.500z" fill="#7d7d7d"/>
<!-- 24 -->
<path d="M2 568.500h16M2 579.500h16" stroke="#00e000" stroke-width="1.800" stroke-dasharray="5.500 2 1.500 2"/>
<path d="M2 572.500q2-2.500 4 0t4 0 4 0 4 0" fill="none" stroke="#000" stroke-width="1"/>
<path d="M2 575.500h16" stroke="#0018f0" stroke-width="1"/>
<path d="M17 582.500h3.500v-3.500z" fill="#7d7d7d"/>
<!-- 25 gray dotted -->
<ellipse cx="10" cy="596" rx="8" ry="7.300" fill="none" stroke="#9a9a9a" stroke-width="1" stroke-dasharray="1 1"/>
<path d="M4.500 591.500h3v9h-3zM13 591.500h3v9h-3zM7.500 592.500h5.500v7h-5.500z" fill="#f4f4f4" stroke="#bdbdbd" stroke-width="1"/>
<path d="M17 604h3.500v-3.500z" fill="#7d7d7d"/>
</svg>
<!-- ===== drawing sheet ===== -->
<svg class="ico" style="left:330px;top:126px;will-change:transform" width="730" height="512" viewBox="330 126 730 512">
<rect x="342.500" y="130.500" width="709" height="501" fill="#fff" stroke="#000" stroke-width="1"/>
<rect x="482.500" y="193.500" width="399" height="348" fill="#fff" stroke="#c6c6c6" stroke-width="1"/>
<path d="M359 628V135H1047V628H348.100" fill="none" stroke="#0000ff" stroke-width="2.200"/>
<path d="M359 147H418V135" fill="none" stroke="#0000ff" stroke-width="2.200"/>
<g transform="translate(361.500 144.300) skewX(-14)"><text x="0" y="0" font-family="Liberation Sans" font-style="normal" font-weight="bold" font-size="7.500" fill="#000" stroke="#000" stroke-width=".450" textLength="54" lengthAdjust="spacingAndGlyphs">SI 500&#39;ЛЛ&#39;999Z99&#39;1ЖЖЛ</text></g>
<path d="M358 386H349.200V486H358M349.200 436H358M352.600 386V486" fill="none" stroke="#0000ff" stroke-width="1.800"/>
<path d="M358 504.800H349V628M349 534.500H358M349 556.200H358M349 577H358M349 607H358M352.900 504.800V628" fill="none" stroke="#0000ff" stroke-width="1.800"/>
<path d="M350.3 400.0h1M350.3 401.3h1.5M350.3 402.6h1.8M350.3 403.5h1.5M350.3 404.6h1M350.3 405.9h1.8M350.3 407.0h1M350.3 407.9h1.8M350.3 409.0h1.8M350.3 409.9h1.8M350.3 410.8h1M350.3 411.9h1.8M350.3 413.0h1.5M350.3 414.1h1.8M350.3 415.2h1M350.3 417.5h1M350.3 418.6h1.8M350.3 419.7h1.5M350.3 420.8h1.5M350.3 422.1h1.8M350.3 423.2h1.5" stroke="#000" stroke-width="0.7" opacity="0.8"/>
<path d="M350.3 452.0h1M350.3 454.3h1.5M350.3 455.4h1M350.3 456.3h1.5M350.3 457.2h1.8M350.3 458.3h1M350.3 459.2h1M350.3 460.5h1.5M350.3 461.4h1.5M350.3 462.7h1.5M350.3 463.6h1.5M350.3 464.9h1M350.3 465.8h1.5M350.3 466.7h1.8M350.3 469.0h1.5" stroke="#000" stroke-width="0.7" opacity="0.8"/>
<path d="M350 509.0h2.2M350 510.1h2.2M350 511.4h2.2M350 512.3h1.3M350 514.8h1.3M350 515.7h1.3M350 516.8h2.2M350 518.9h1.3M350 520.0h1.8M350 520.9h1.3M350 521.8h1.8M350 522.7h1.3M350 523.6h1.3M350 524.5h1.3M350 525.8h2.2M350 526.7h2.2M350 527.6h1.8M350 529.9h1.8M350 530.8h1.8" stroke="#000" stroke-width="1.25" opacity="1"/>
<path d="M350 537.0h2.2M350 537.9h1.8M350 540.0h2.2M350 541.3h2.2M350 542.4h1.3M350 543.5h1.3M350 544.8h2.2M350 546.1h1.3M350 547.4h2.2M350 548.5h2.2M350 549.8h1.8M350 550.9h1.8M350 552.0h1.8M350 553.3h1.3" stroke="#000" stroke-width="1.25" opacity="1"/>
<path d="M350 559.0h1.8M350 559.9h1.3M350 560.8h1.3M350 561.9h2.2M350 564.0h1.8M350 566.3h1.3M350 567.6h2.2M350 568.5h2.2M350 569.8h1.3M350 571.1h1.3M350 573.2h1.3M350 574.3h2.2" stroke="#000" stroke-width="1.25" opacity="1"/>
<path d="M350 580.0h1.3M350 581.1h1.3M350 582.0h1.3M350 582.9h2.2M350 583.8h1.3M350 584.9h1.8M350 586.0h1.8M350 586.9h1.3M350 588.2h1.8M350 589.3h1.8M350 590.6h1.8M350 591.5h1.3M350 592.6h1.8M350 593.5h1.8M350 594.4h1.8M350 595.7h1.3M350 597.0h2.2M350 597.9h1.3M350 599.0h1.3M350 600.3h2.2M350 601.4h1.8M350 602.5h2.2M350 603.4h1.8" stroke="#000" stroke-width="1.25" opacity="1"/>
<path d="M350 610.0h1.8M350 611.3h1.3M350 612.2h1.3M350 613.3h2.2M350 614.2h2.2M350 616.7h1.8M350 617.6h1.8M350 618.9h1.3M350 621.0h1.3M350 622.3h2.2M350 623.2h1.8M350 624.5h1.8M350 625.4h2.2" stroke="#000" stroke-width="1.25" opacity="1"/>
<path d="M342.500 587V631.500H378" fill="none" stroke="#8c8c8c" stroke-width="1"/>
<path d="M339.500 605l3-6 3 6z" fill="#fff" stroke="#8c8c8c" stroke-width="1"/>
<path d="M343.500 587l1.500 4 1.500-4M345 591v4" fill="none" stroke="#8c8c8c" stroke-width=".900"/>
<path d="M368.500 629.500h5l4 2-4 2h-5z" fill="#fff" stroke="#8c8c8c" stroke-width="1"/>
<path d="M377.500 623l4.500 5.500M382 623l-4.500 5.500" stroke="#8c8c8c" stroke-width=".900"/>
<g font-family="Liberation Sans" font-size="9.600" fill="#2e2e2e"><text x="661.700" y="204.100" textLength="23" lengthAdjust="spacing">ОРУ</text><text x="690.300" y="204.100" textLength="18.300" lengthAdjust="spacing">110</text><text x="712.500" y="204.100" textLength="10.800" lengthAdjust="spacing">кВ</text></g>
<g id="uh">
<path d="M508.9 226L591 226" stroke="#0000ff" stroke-width="2.3" stroke-linecap="butt" fill="none"/>
<rect x="508.1" y="233.1" width="8" height="15.8" rx="0" stroke="#0000ff" stroke-width="2.2" fill="none"/>
<path d="M517 241L528 241" stroke="#0000ff" stroke-width="2.2" stroke-linecap="butt" fill="none"/>
<path d="M533 241L593 241" stroke="#0000ff" stroke-width="2.2" stroke-linecap="butt" fill="none"/>
<path d="M529 235.8L529 245" stroke="#0000ff" stroke-width="2.2" stroke-linecap="butt" fill="none"/>
<path d="M532 235.8L532 245" stroke="#0000ff" stroke-width="2.2" stroke-linecap="butt" fill="none"/>
<path d="M544 241L544 249.8L541 249.8" stroke="#0000ff" stroke-width="2.2" fill="none" stroke-linejoin="miter"/>
<circle cx="543.6" cy="241" r="1.3" stroke="#0000ff" stroke-width="1.3" fill="#fff"/>
<path d="M549.3 251.2L543.9 257" stroke="#0000ff" stroke-width="1.6" stroke-linecap="butt" fill="none"/>
<path d="M544 256.2L544 274" stroke="#0000ff" stroke-width="2.2" stroke-linecap="butt" fill="none"/>
<rect x="539.05" y="273" width="9.5" height="1.900" fill="#0000ff"/>
<rect x="540.8" y="274.9" width="6" height="1.900" fill="#0000ff"/>
<path d="M590.4 227L590.4 247.5" stroke="#000" stroke-width="1.2" stroke-linecap="butt" fill="none"/>
<path d="M590.4 247.5c-4.200 .500 -4.200 5 0 5.600c-4.200 .500 -4.200 5 0 5.600c-4.200 .500 -4.200 5 0 5.600c-4.200 .500 -4.200 5 0 5.600v2" fill="none" stroke="#000" stroke-width="1.100"/>
<circle cx="590.8" cy="241" r="1.3" stroke="#0000ff" stroke-width="1.3" fill="#fff"/>
<path d="M590.3 271.5L590.3 289" stroke="#0000ff" stroke-width="2.3" stroke-linecap="butt" fill="none"/>
<path d="M588 288.7L592.2 288.7" stroke="#0000ff" stroke-width="2" stroke-linecap="butt" fill="none"/>
<rect x="554.9" y="272.1" width="4.2" height="8.6" fill="#0000ff"/>
<path d="M559 277L575.5 277" stroke="#0000ff" stroke-width="2.2" stroke-linecap="butt" fill="none"/>
<path d="M575 277L581 282.8" stroke="#0000ff" stroke-width="1.8" stroke-linecap="butt" fill="none"/>
<path d="M581 274.6L581 279" stroke="#0000ff" stroke-width="2" stroke-linecap="butt" fill="none"/>
<path d="M581 277L607.7 277" stroke="#0000ff" stroke-width="2.2" stroke-linecap="butt" fill="none"/>
<path d="M606.9 275.6L606.9 279" stroke="#0000ff" stroke-width="2.2" stroke-linecap="butt" fill="none"/>
<path d="M576.5 279L576.5 305.5" stroke="#000" stroke-width="1.2" stroke-linecap="butt" fill="none"/>
<path d="M576.5 291.4L597 291.4" stroke="#000" stroke-width="1.2" stroke-linecap="butt" fill="none"/>
<path d="M597.300 292l2.700 -2.600 2.700 2.600 -2.700 2.600z" fill="#fff" stroke="#0000ff" stroke-width="1.500"/>
<path d="M596.500 289.800q-4.500 1.500 -6.200 6.500" fill="none" stroke="#0000ff" stroke-width="1.800"/>
<path d="M590.3 295.5L590.3 346.5" stroke="#0000ff" stroke-width="2.3" stroke-linecap="butt" fill="none"/>
<path d="M587.8 346L592 346" stroke="#0000ff" stroke-width="2" stroke-linecap="butt" fill="none"/>
<path d="M607.3 271.4L613 277.3" stroke="#0000ff" stroke-width="1.6" stroke-linecap="butt" fill="none"/>
<path d="M612.5 277L640 277" stroke="#0000ff" stroke-width="2.2" stroke-linecap="butt" fill="none"/>
<path d="M609.5 277L609.5 290.5" stroke="#000" stroke-width="1.2" stroke-linecap="butt" fill="none"/>
<path d="M609.5 290.5L620.5 290.5" stroke="#000" stroke-width="1.2" stroke-linecap="butt" fill="none"/>
<path d="M622.5 276L622.5 286.4" stroke="#0000ff" stroke-width="2.2" stroke-linecap="butt" fill="none"/>
<path d="M621 285.8L624.2 285.8" stroke="#0000ff" stroke-width="1.8" stroke-linecap="butt" fill="none"/>
<path d="M617.3 286.4L623.2 292.5" stroke="#0000ff" stroke-width="1.6" stroke-linecap="butt" fill="none"/>
<path d="M622.5 292L622.5 301" stroke="#0000ff" stroke-width="2.2" stroke-linecap="butt" fill="none"/>
<rect x="617.45" y="300.3" width="9.5" height="1.900" fill="#0000ff"/>
<rect x="619.2" y="302.2" width="6" height="1.900" fill="#0000ff"/>
<rect x="554.9" y="300.2" width="4.2" height="8.6" fill="#0000ff"/>
<path d="M559 305L575.5 305" stroke="#0000ff" stroke-width="2.2" stroke-linecap="butt" fill="none"/>
<path d="M575 305L581.3 310.8" stroke="#0000ff" stroke-width="1.8" stroke-linecap="butt" fill="none"/>
<path d="M581 303L581 306.8" stroke="#0000ff" stroke-width="2" stroke-linecap="butt" fill="none"/>
<path d="M581 305L592.7 305" stroke="#0000ff" stroke-width="2.2" stroke-linecap="butt" fill="none"/>
<circle cx="590.5" cy="305" r="1.3" stroke="#0000ff" stroke-width="1.3" fill="#fff"/>
<path d="M534.8 312L597.8 312" stroke="#0000ff" stroke-width="2.3" stroke-linecap="butt" fill="none"/>
<path d="M597 310L597 314.2" stroke="#0000ff" stroke-width="2.2" stroke-linecap="butt" fill="none"/>
<circle cx="590.5" cy="312" r="1.3" stroke="#0000ff" stroke-width="1.3" fill="#fff"/>
<path d="M598.2 306.4L604.7 312.2" stroke="#0000ff" stroke-width="1.6" stroke-linecap="butt" fill="none"/>
<path d="M604 312L640 312" stroke="#0000ff" stroke-width="2.3" stroke-linecap="butt" fill="none"/>
<path d="M600.3 312L600.3 325.5" stroke="#000" stroke-width="1.2" stroke-linecap="butt" fill="none"/>
<path d="M600.3 325.5L611 325.5" stroke="#000" stroke-width="1.2" stroke-linecap="butt" fill="none"/>
<path d="M613.2 311L613.2 321.4" stroke="#0000ff" stroke-width="2.2" stroke-linecap="butt" fill="none"/>
<path d="M611.700 312l1.500 -1.900 1.500 1.900z" fill="#0000ff"/>
<path d="M611 320.9L615 320.9" stroke="#0000ff" stroke-width="1.8" stroke-linecap="butt" fill="none"/>
<path d="M608.2 321.4L613.8 327" stroke="#0000ff" stroke-width="1.6" stroke-linecap="butt" fill="none"/>
<path d="M613.2 326.5L613.2 343.6" stroke="#0000ff" stroke-width="2.2" stroke-linecap="butt" fill="none"/>
<rect x="608.25" y="343" width="9.5" height="1.900" fill="#0000ff"/>
<rect x="610" y="344.9" width="6" height="1.900" fill="#0000ff"/>
<rect x="499" y="298.95" width="3.8" height="8.7" fill="#0000ff"/>
<path d="M502 303L527.7 303L532.5 306.8" stroke="#0000ff" stroke-width="2.2" fill="none" stroke-linejoin="miter"/>
<path d="M516.8 303L516.8 305.5" stroke="#0000ff" stroke-width="2" stroke-linecap="butt" fill="none"/>
<circle cx="516" cy="311.5" r="6.3" stroke="#0000ff" stroke-width="1.7" fill="none"/>
<circle cx="528.5" cy="311.5" r="6.3" stroke="#0000ff" stroke-width="1.7" fill="none"/>
<circle cx="522.5" cy="322.3" r="6.4" stroke="#0000ff" stroke-width="1.7" fill="none"/>
<path d="M513 309l3 2.500 3 -2.500M516 311.500v3.500M525.500 309l3 2.500 3 -2.500M528.500 311.500v3.500" fill="none" stroke="#0000ff" stroke-width="1.300"/>
<path d="M518.500 322.500l4 -2.500 4 2.500q-4 2.500 -8 0z" fill="none" stroke="#0000ff" stroke-width="1.200"/>
<rect x="543" y="318.05" width="4" height="8.5" fill="#0000ff"/>
<path d="M547 322.3L551.5 322.3" stroke="#0000ff" stroke-width="2.2" stroke-linecap="butt" fill="none"/>
<rect x="551.6" y="318.9" width="14.2" height="6.8" rx="0" stroke="#0000ff" stroke-width="2.2" fill="#fff"/>
<path d="M551.4 328.4L564.7 314.3" stroke="#0000ff" stroke-width="1.5" stroke-linecap="butt" fill="none"/>
<path d="M566.8 322.3L592.7 322.3" stroke="#0000ff" stroke-width="2.2" stroke-linecap="butt" fill="none"/>
<circle cx="590.5" cy="322.5" r="1.3" stroke="#0000ff" stroke-width="1.3" fill="#fff"/>
<rect x="554.9" y="329.2" width="4.2" height="8.6" fill="#0000ff"/>
<path d="M559 334L575 334" stroke="#0000ff" stroke-width="2.2" stroke-linecap="butt" fill="none"/>
<path d="M574.5 334L580.8 339.8" stroke="#0000ff" stroke-width="1.8" stroke-linecap="butt" fill="none"/>
<path d="M581 331.6L581 336" stroke="#0000ff" stroke-width="2" stroke-linecap="butt" fill="none"/>
<path d="M581 334L592.7 334" stroke="#0000ff" stroke-width="2.2" stroke-linecap="butt" fill="none"/>
<path d="M576.7 338L576.7 362.5" stroke="#000" stroke-width="1.2" stroke-linecap="butt" fill="none"/>
<path d="M576.7 348.4L596.5 348.4" stroke="#000" stroke-width="1.2" stroke-linecap="butt" fill="none"/>
<path d="M597 349l2.700 -2.600 2.700 2.600 -2.700 2.600z" fill="#fff" stroke="#0000ff" stroke-width="1.500"/>
<path d="M596.300 346.800q-4.500 1.500 -6 6.500" fill="none" stroke="#0000ff" stroke-width="1.800"/>
<rect x="554.9" y="357.3" width="4.2" height="8.6" fill="#0000ff"/>
<path d="M559 362L575.5 362" stroke="#0000ff" stroke-width="2.2" stroke-linecap="butt" fill="none"/>
<path d="M575 362L581.2 367.6" stroke="#0000ff" stroke-width="1.8" stroke-linecap="butt" fill="none"/>
<path d="M581 360L581 364" stroke="#0000ff" stroke-width="2" stroke-linecap="butt" fill="none"/>
<path d="M581 362L592.7 362" stroke="#0000ff" stroke-width="2.2" stroke-linecap="butt" fill="none"/>
<path d="M590.3 352.5L590.3 374.4" stroke="#0000ff" stroke-width="2.3" stroke-linecap="butt" fill="none"/>
</g>
<use href="#uh" transform="translate(1371.300 0) scale(-1 1)"/>
<path d="M640 277L732 277" stroke="#0000ff" stroke-width="2.3" stroke-linecap="butt" fill="none"/>
<path d="M640 312L679 312" stroke="#0000ff" stroke-width="2.3" stroke-linecap="butt" fill="none"/>
<path d="M694 312L732 312" stroke="#0000ff" stroke-width="2.3" stroke-linecap="butt" fill="none"/>
<rect x="679.3" y="304.3" width="14.7" height="15.5" rx="0" stroke="#0000ff" stroke-width="2.2" fill="#fff"/>
<path d="M679.3 312L682.5 312" stroke="#0000ff" stroke-width="2" stroke-linecap="butt" fill="none"/>
<path d="M682.3 312.2L690 305.8" stroke="#0000ff" stroke-width="1.6" stroke-linecap="butt" fill="none"/>
<path d="M690 310L690 314.2" stroke="#0000ff" stroke-width="2" stroke-linecap="butt" fill="none"/>
<path d="M690 312L694 312" stroke="#0000ff" stroke-width="2" stroke-linecap="butt" fill="none"/>
<path d="M672.5 267.1L701.8 267.1" stroke="#0000ff" stroke-width="2.8" stroke-linecap="butt" fill="none"/>
<path d="M673 266.3l2.1225 -1.900l1.76875 0l3.18375 1.900l2.1225 -1.900l1.76875 0l3.18375 1.900l2.1225 -1.900l1.76875 0l3.18375 1.900l2.1225 -1.900l1.76875 0l3.18375 1.900z" fill="#0000ff" stroke="#0000ff" stroke-width=".800" stroke-linejoin="round"/>
<path d="M673.6 267.1L673.6 269.8" stroke="#0000ff" stroke-width="2.2" stroke-linecap="butt" fill="none"/>
<path d="M685.15 267.1L685.15 269.8" stroke="#0000ff" stroke-width="2.2" stroke-linecap="butt" fill="none"/>
<path d="M690.65 267.1L690.65 269.8" stroke="#0000ff" stroke-width="2.2" stroke-linecap="butt" fill="none"/>
<path d="M700.7 267.1L700.7 269.8" stroke="#0000ff" stroke-width="2.2" stroke-linecap="butt" fill="none"/>
<path d="M672.5 277L701.8 277" stroke="#0000ff" stroke-width="2.8" stroke-linecap="butt" fill="none"/>
<path d="M673 276.2l2.1225 -1.900l1.76875 0l3.18375 1.900l2.1225 -1.900l1.76875 0l3.18375 1.900l2.1225 -1.900l1.76875 0l3.18375 1.900l2.1225 -1.900l1.76875 0l3.18375 1.900z" fill="#0000ff" stroke="#0000ff" stroke-width=".800" stroke-linejoin="round"/>
<path d="M673.6 277L673.6 279.3" stroke="#0000ff" stroke-width="2.2" stroke-linecap="butt" fill="none"/>
<path d="M685.15 277L685.15 279.3" stroke="#0000ff" stroke-width="2.2" stroke-linecap="butt" fill="none"/>
<path d="M690.65 277L690.65 279.3" stroke="#0000ff" stroke-width="2.2" stroke-linecap="butt" fill="none"/>
<path d="M700.7 277L700.7 279.3" stroke="#0000ff" stroke-width="2.2" stroke-linecap="butt" fill="none"/>
<path d="M672.5 286.8L701.8 286.8" stroke="#0000ff" stroke-width="2.8" stroke-linecap="butt" fill="none"/>
<path d="M673 286l2.1225 -1.900l1.76875 0l3.18375 1.900l2.1225 -1.900l1.76875 0l3.18375 1.900l2.1225 -1.900l1.76875 0l3.18375 1.900l2.1225 -1.900l1.76875 0l3.18375 1.900z" fill="#0000ff" stroke="#0000ff" stroke-width=".800" stroke-linejoin="round"/>
<path d="M673.6 286.8L673.6 289.1" stroke="#0000ff" stroke-width="2.2" stroke-linecap="butt" fill="none"/>
<path d="M685.15 286.8L685.15 289.1" stroke="#0000ff" stroke-width="2.2" stroke-linecap="butt" fill="none"/>
<path d="M690.65 286.8L690.65 289.1" stroke="#0000ff" stroke-width="2.2" stroke-linecap="butt" fill="none"/>
<path d="M700.7 286.8L700.7 289.1" stroke="#0000ff" stroke-width="2.2" stroke-linecap="butt" fill="none"/>
<path d="M636.5 302.3L656 302.3" stroke="#0000ff" stroke-width="2.8" stroke-linecap="butt" fill="none"/>
<path d="M637 301.5l1.3875 -1.900l1.15625 0l2.08125 1.900l1.3875 -1.900l1.15625 0l2.08125 1.900l1.3875 -1.900l1.15625 0l2.08125 1.900l1.3875 -1.900l1.15625 0l2.08125 1.900z" fill="#0000ff" stroke="#0000ff" stroke-width=".800" stroke-linejoin="round"/>
<path d="M637.6 302.3L637.6 305" stroke="#0000ff" stroke-width="2.2" stroke-linecap="butt" fill="none"/>
<path d="M644.25 302.3L644.25 305" stroke="#0000ff" stroke-width="2.2" stroke-linecap="butt" fill="none"/>
<path d="M649.75 302.3L649.75 305" stroke="#0000ff" stroke-width="2.2" stroke-linecap="butt" fill="none"/>
<path d="M654.9 302.3L654.9 305" stroke="#0000ff" stroke-width="2.2" stroke-linecap="butt" fill="none"/>
<path d="M636.5 312L656 312" stroke="#0000ff" stroke-width="2.8" stroke-linecap="butt" fill="none"/>
<path d="M637 311.2l1.3875 -1.900l1.15625 0l2.08125 1.900l1.3875 -1.900l1.15625 0l2.08125 1.900l1.3875 -1.900l1.15625 0l2.08125 1.900l1.3875 -1.900l1.15625 0l2.08125 1.900z" fill="#0000ff" stroke="#0000ff" stroke-width=".800" stroke-linejoin="round"/>
<path d="M637.6 312L637.6 314.3" stroke="#0000ff" stroke-width="2.2" stroke-linecap="butt" fill="none"/>
<path d="M644.25 312L644.25 314.3" stroke="#0000ff" stroke-width="2.2" stroke-linecap="butt" fill="none"/>
<path d="M649.75 312L649.75 314.3" stroke="#0000ff" stroke-width="2.2" stroke-linecap="butt" fill="none"/>
<path d="M654.9 312L654.9 314.3" stroke="#0000ff" stroke-width="2.2" stroke-linecap="butt" fill="none"/>
<path d="M636.5 321.8L656 321.8" stroke="#0000ff" stroke-width="2.8" stroke-linecap="butt" fill="none"/>
<path d="M637 321l1.3875 -1.900l1.15625 0l2.08125 1.900l1.3875 -1.900l1.15625 0l2.08125 1.900l1.3875 -1.900l1.15625 0l2.08125 1.900l1.3875 -1.900l1.15625 0l2.08125 1.900z" fill="#0000ff" stroke="#0000ff" stroke-width=".800" stroke-linejoin="round"/>
<path d="M637.6 321.8L637.6 324.1" stroke="#0000ff" stroke-width="2.2" stroke-linecap="butt" fill="none"/>
<path d="M644.25 321.8L644.25 324.1" stroke="#0000ff" stroke-width="2.2" stroke-linecap="butt" fill="none"/>
<path d="M649.75 321.8L649.75 324.1" stroke="#0000ff" stroke-width="2.2" stroke-linecap="butt" fill="none"/>
<path d="M654.9 321.8L654.9 324.1" stroke="#0000ff" stroke-width="2.2" stroke-linecap="butt" fill="none"/>
<path d="M717.5 302.3L737 302.3" stroke="#0000ff" stroke-width="2.8" stroke-linecap="butt" fill="none"/>
<path d="M718 301.5l1.3875 -1.900l1.15625 0l2.08125 1.900l1.3875 -1.900l1.15625 0l2.08125 1.900l1.3875 -1.900l1.15625 0l2.08125 1.900l1.3875 -1.900l1.15625 0l2.08125 1.900z" fill="#0000ff" stroke="#0000ff" stroke-width=".800" stroke-linejoin="round"/>
<path d="M718.6 302.3L718.6 305" stroke="#0000ff" stroke-width="2.2" stroke-linecap="butt" fill="none"/>
<path d="M725.25 302.3L725.25 305" stroke="#0000ff" stroke-width="2.2" stroke-linecap="butt" fill="none"/>
<path d="M730.75 302.3L730.75 305" stroke="#0000ff" stroke-width="2.2" stroke-linecap="butt" fill="none"/>
<path d="M735.9 302.3L735.9 305" stroke="#0000ff" stroke-width="2.2" stroke-linecap="butt" fill="none"/>
<path d="M717.5 312L737 312" stroke="#0000ff" stroke-width="2.8" stroke-linecap="butt" fill="none"/>
<path d="M718 311.2l1.3875 -1.900l1.15625 0l2.08125 1.900l1.3875 -1.900l1.15625 0l2.08125 1.900l1.3875 -1.900l1.15625 0l2.08125 1.900l1.3875 -1.900l1.15625 0l2.08125 1.900z" fill="#0000ff" stroke="#0000ff" stroke-width=".800" stroke-linejoin="round"/>
<path d="M718.6 312L718.6 314.3" stroke="#0000ff" stroke-width="2.2" stroke-linecap="butt" fill="none"/>
<path d="M725.25 312L725.25 314.3" stroke="#0000ff" stroke-width="2.2" stroke-linecap="butt" fill="none"/>
<path d="M730.75 312L730.75 314.3" stroke="#0000ff" stroke-width="2.2" stroke-linecap="butt" fill="none"/>
<path d="M735.9 312L735.9 314.3" stroke="#0000ff" stroke-width="2.2" stroke-linecap="butt" fill="none"/>
<path d="M717.5 321.8L737 321.8" stroke="#0000ff" stroke-width="2.8" stroke-linecap="butt" fill="none"/>
<path d="M718 321l1.3875 -1.900l1.15625 0l2.08125 1.900l1.3875 -1.900l1.15625 0l2.08125 1.900l1.3875 -1.900l1.15625 0l2.08125 1.900l1.3875 -1.900l1.15625 0l2.08125 1.900z" fill="#0000ff" stroke="#0000ff" stroke-width=".800" stroke-linejoin="round"/>
<path d="M718.6 321.8L718.6 324.1" stroke="#0000ff" stroke-width="2.2" stroke-linecap="butt" fill="none"/>
<path d="M725.25 321.8L725.25 324.1" stroke="#0000ff" stroke-width="2.2" stroke-linecap="butt" fill="none"/>
<path d="M730.75 321.8L730.75 324.1" stroke="#0000ff" stroke-width="2.2" stroke-linecap="butt" fill="none"/>
<path d="M735.9 321.8L735.9 324.1" stroke="#0000ff" stroke-width="2.2" stroke-linecap="butt" fill="none"/>
<path d="M590.3 374L590.3 378.4" stroke="#0000ff" stroke-width="2.3" stroke-linecap="butt" fill="none"/>
<rect x="583.1" y="374.3" width="14.8" height="14.6" rx="1" stroke="#0000ff" stroke-width="2.2" fill="none"/>
<path d="M588 378L592 378" stroke="#0000ff" stroke-width="1.6" stroke-linecap="butt" fill="none"/>
<path d="M595.5 378.2L589.7 384.8" stroke="#0000ff" stroke-width="1.6" stroke-linecap="butt" fill="none"/>
<path d="M590.3 384.3L590.3 389" stroke="#0000ff" stroke-width="2.3" stroke-linecap="butt" fill="none"/>
<path d="M590.3 389L590.3 447.5" stroke="#0000ff" stroke-width="2.3" stroke-linecap="butt" fill="none"/>
<path d="M588 400.6L601 400.6" stroke="#0000ff" stroke-width="2.2" stroke-linecap="butt" fill="none"/>
<path d="M600 399L600 402.7" stroke="#0000ff" stroke-width="2.2" stroke-linecap="butt" fill="none"/>
<path d="M600 395L606.6 400.8" stroke="#0000ff" stroke-width="1.6" stroke-linecap="butt" fill="none"/>
<path d="M606.2 400.6L638 400.6" stroke="#0000ff" stroke-width="2.2" stroke-linecap="butt" fill="none"/>
<path d="M618 403.6v-4M626.5 403.6v-4" fill="none" stroke="#0000ff" stroke-width="2"/>
<path d="M617.5 399h3.75M623.05 399h3.95" fill="none" stroke="#0000ff" stroke-width="1.600"/>
<rect x="636.9" y="395.8" width="4.2" height="9.6" fill="#0000ff"/>
<path d="M580.3 415.3L580.3 434.8" stroke="#0000ff" stroke-width="2.6" stroke-linecap="butt" fill="none"/>
<path d="M581.1 415.8l2.1 1.3875l0 1.15625l-2.1 2.08125l2.1 1.3875l0 1.15625l-2.1 2.08125l2.1 1.3875l0 1.15625l-2.1 2.08125l2.1 1.3875l0 1.15625l-2.1 2.08125z" fill="#0000ff" stroke="#0000ff" stroke-width=".800" stroke-linejoin="round"/>
<path d="M578 416.2L581.8 416.2" stroke="#0000ff" stroke-width="1.9" stroke-linecap="butt" fill="none"/>
<path d="M578 433.9L581.8 433.9" stroke="#0000ff" stroke-width="1.9" stroke-linecap="butt" fill="none"/>
<path d="M590.3 415.3L590.3 434.8" stroke="#0000ff" stroke-width="2.6" stroke-linecap="butt" fill="none"/>
<path d="M591.1 415.8l1.5 1.3875l0 1.15625l-1.5 2.08125l1.5 1.3875l0 1.15625l-1.5 2.08125l1.5 1.3875l0 1.15625l-1.5 2.08125l1.5 1.3875l0 1.15625l-1.5 2.08125z" fill="#0000ff" stroke="#0000ff" stroke-width=".800" stroke-linejoin="round"/>
<path d="M589.5 415.8l-1.5 1.3875l0 1.15625l1.5 2.08125l-1.5 1.3875l0 1.15625l1.5 2.08125l-1.5 1.3875l0 1.15625l1.5 2.08125l-1.5 1.3875l0 1.15625l1.5 2.08125z" fill="#0000ff" stroke="#0000ff" stroke-width=".800" stroke-linejoin="round"/>
<path d="M600.2 415.3L600.2 434.8" stroke="#0000ff" stroke-width="2.6" stroke-linecap="butt" fill="none"/>
<path d="M601 415.8l2.1 1.3875l0 1.15625l-2.1 2.08125l2.1 1.3875l0 1.15625l-2.1 2.08125l2.1 1.3875l0 1.15625l-2.1 2.08125l2.1 1.3875l0 1.15625l-2.1 2.08125z" fill="#0000ff" stroke="#0000ff" stroke-width=".800" stroke-linejoin="round"/>
<rect x="524" y="437.2" width="4" height="9.6" fill="#0000ff"/>
<path d="M528 441.6L543.8 441.6" stroke="#0000ff" stroke-width="2.2" stroke-linecap="butt" fill="none"/>
<path d="M543.3 441.8L549.8 436.2" stroke="#0000ff" stroke-width="1.6" stroke-linecap="butt" fill="none"/>
<path d="M550.2 440L550.2 443.8" stroke="#0000ff" stroke-width="2.2" stroke-linecap="butt" fill="none"/>
<path d="M550.2 441.6L559.2 441.6L559.2 469.6L548 469.6" stroke="#0000ff" stroke-width="2.2" fill="none" stroke-linejoin="miter"/>
<path d="M559.2 454.8L583.5 454.8" stroke="#0000ff" stroke-width="2.2" stroke-linecap="butt" fill="none"/>
<path d="M566 457.8v-4M574.5 457.8v-4" fill="none" stroke="#0000ff" stroke-width="2"/>
<path d="M565.5 453.2h3.75M571.05 453.2h3.95" fill="none" stroke="#0000ff" stroke-width="1.600"/>
<rect x="524" y="465.2" width="4" height="9.6" fill="#0000ff"/>
<path d="M528 469.6L532 469.6" stroke="#0000ff" stroke-width="2.2" stroke-linecap="butt" fill="none"/>
<rect x="532.4" y="466.5" width="14.6" height="6.8" rx="0" stroke="#0000ff" stroke-width="2.2" fill="#fff"/>
<path d="M532.3 464L544.8 477.4" stroke="#0000ff" stroke-width="1.5" stroke-linecap="butt" fill="none"/>
<circle cx="590.3" cy="454.5" r="6.8" stroke="#0000ff" stroke-width="1.7" fill="none"/>
<circle cx="600.7" cy="460.3" r="6.5" stroke="#0000ff" stroke-width="1.7" fill="none"/>
<circle cx="590.3" cy="467" r="6.8" stroke="#0000ff" stroke-width="1.7" fill="none"/>
<path d="M587 450.500l3.300 3 3.300 -3M590.3 453.500v4.500M598 457l2.700 2.800 2.700 -2.800M600.7 459.800v4" fill="none" stroke="#0000ff" stroke-width="1.300"/>
<path d="M586.8 470.500l3.500 -6 3.500 6z" fill="none" stroke="#0000ff" stroke-width="1.300"/>
<path d="M586.5 456l7.500 9M594 456l-7.500 9" stroke="#0000ff" stroke-width="1.600"/>
<path d="M607 460.3L621.4 460.3" stroke="#0000ff" stroke-width="2.2" stroke-linecap="butt" fill="none"/>
<circle cx="619.4" cy="460.3" r="1.3" stroke="#0000ff" stroke-width="1.3" fill="#fff"/>
<rect x="616.2" y="436" width="6.8" height="15.6" rx="0" stroke="#0000ff" stroke-width="2.2" fill="#fff"/>
<path d="M613 436L625.6 449.5" stroke="#0000ff" stroke-width="1.5" stroke-linecap="butt" fill="none"/>
<rect x="615.2" y="432" width="8.800" height="2.200" fill="#0000ff"/>
<rect x="617.3" y="430.300" width="4.700" height="1.900" fill="#0000ff"/>
<path d="M619.2 434L619.2 436" stroke="#0000ff" stroke-width="2.2" stroke-linecap="butt" fill="none"/>
<path d="M619.2 452.6L619.2 459" stroke="#0000ff" stroke-width="2.2" stroke-linecap="butt" fill="none"/>
<path d="M590.3 473.5L590.3 518.5" stroke="#0000ff" stroke-width="2.3" stroke-linecap="butt" fill="none"/>
<path d="M590.4 518.5L590.4 539.8" stroke="#000" stroke-width="1.3" stroke-linecap="butt" fill="none"/>
<circle cx="590.3" cy="518.3" r="1.3" stroke="#0000ff" stroke-width="1.3" fill="#fff"/>
<path d="M591.5 518.3L600 518.3" stroke="#0000ff" stroke-width="2.2" stroke-linecap="butt" fill="none"/>
<rect x="600" y="514.5" width="14.5" height="6.8" rx="0" stroke="#0000ff" stroke-width="2.2" fill="#fff"/>
<path d="M601 511L615 525.7" stroke="#0000ff" stroke-width="1.5" stroke-linecap="butt" fill="none"/>
<path d="M615.5 518.3L620 518.3" stroke="#0000ff" stroke-width="2.2" stroke-linecap="butt" fill="none"/>
<rect x="619" y="514" width="4" height="8.8" fill="#0000ff"/>
<path d="M781 374L781 378.4" stroke="#0000ff" stroke-width="2.3" stroke-linecap="butt" fill="none"/>
<rect x="773.8" y="374.3" width="14.8" height="14.6" rx="1" stroke="#0000ff" stroke-width="2.2" fill="none"/>
<path d="M778.7 378L782.7 378" stroke="#0000ff" stroke-width="1.6" stroke-linecap="butt" fill="none"/>
<path d="M786.2 378.2L780.4 384.8" stroke="#0000ff" stroke-width="1.6" stroke-linecap="butt" fill="none"/>
<path d="M781 384.3L781 389" stroke="#0000ff" stroke-width="2.3" stroke-linecap="butt" fill="none"/>
<path d="M781 389L781 447.5" stroke="#0000ff" stroke-width="2.3" stroke-linecap="butt" fill="none"/>
<path d="M778.7 400.6L791.7 400.6" stroke="#0000ff" stroke-width="2.2" stroke-linecap="butt" fill="none"/>
<path d="M790.7 399L790.7 402.7" stroke="#0000ff" stroke-width="2.2" stroke-linecap="butt" fill="none"/>
<path d="M790.7 395L797.3 400.8" stroke="#0000ff" stroke-width="1.6" stroke-linecap="butt" fill="none"/>
<path d="M796.9 400.6L828.7 400.6" stroke="#0000ff" stroke-width="2.2" stroke-linecap="butt" fill="none"/>
<path d="M808.7 403.6v-4M817.2 403.6v-4" fill="none" stroke="#0000ff" stroke-width="2"/>
<path d="M808.2 399h3.75M813.75 399h3.95" fill="none" stroke="#0000ff" stroke-width="1.600"/>
<rect x="827.6" y="395.8" width="4.2" height="9.6" fill="#0000ff"/>
<path d="M791 415.3L791 434.8" stroke="#0000ff" stroke-width="2.6" stroke-linecap="butt" fill="none"/>
<path d="M790.2 415.8l-2.1 1.3875l0 1.15625l2.1 2.08125l-2.1 1.3875l0 1.15625l2.1 2.08125l-2.1 1.3875l0 1.15625l2.1 2.08125l-2.1 1.3875l0 1.15625l2.1 2.08125z" fill="#0000ff" stroke="#0000ff" stroke-width=".800" stroke-linejoin="round"/>
<path d="M793.3 416.2L789.5 416.2" stroke="#0000ff" stroke-width="1.9" stroke-linecap="butt" fill="none"/>
<path d="M793.3 433.9L789.5 433.9" stroke="#0000ff" stroke-width="1.9" stroke-linecap="butt" fill="none"/>
<path d="M781 415.3L781 434.8" stroke="#0000ff" stroke-width="2.6" stroke-linecap="butt" fill="none"/>
<path d="M780.2 415.8l-1.5 1.3875l0 1.15625l1.5 2.08125l-1.5 1.3875l0 1.15625l1.5 2.08125l-1.5 1.3875l0 1.15625l1.5 2.08125l-1.5 1.3875l0 1.15625l1.5 2.08125z" fill="#0000ff" stroke="#0000ff" stroke-width=".800" stroke-linejoin="round"/>
<path d="M781.8 415.8l1.5 1.3875l0 1.15625l-1.5 2.08125l1.5 1.3875l0 1.15625l-1.5 2.08125l1.5 1.3875l0 1.15625l-1.5 2.08125l1.5 1.3875l0 1.15625l-1.5 2.08125z" fill="#0000ff" stroke="#0000ff" stroke-width=".800" stroke-linejoin="round"/>
<path d="M771.1 415.3L771.1 434.8" stroke="#0000ff" stroke-width="2.6" stroke-linecap="butt" fill="none"/>
<path d="M770.3 415.8l-2.1 1.3875l0 1.15625l2.1 2.08125l-2.1 1.3875l0 1.15625l2.1 2.08125l-2.1 1.3875l0 1.15625l2.1 2.08125l-2.1 1.3875l0 1.15625l2.1 2.08125z" fill="#0000ff" stroke="#0000ff" stroke-width=".800" stroke-linejoin="round"/>
<rect x="714.7" y="437.2" width="4" height="9.6" fill="#0000ff"/>
<path d="M718.7 441.6L734.5 441.6" stroke="#0000ff" stroke-width="2.2" stroke-linecap="butt" fill="none"/>
<path d="M734 441.8L740.5 436.2" stroke="#0000ff" stroke-width="1.6" stroke-linecap="butt" fill="none"/>
<path d="M740.9 440L740.9 443.8" stroke="#0000ff" stroke-width="2.2" stroke-linecap="butt" fill="none"/>
<path d="M740.9 441.6L749.9 441.6L749.9 469.6L738.7 469.6" stroke="#0000ff" stroke-width="2.2" fill="none" stroke-linejoin="miter"/>
<path d="M749.9 454.8L774.2 454.8" stroke="#0000ff" stroke-width="2.2" stroke-linecap="butt" fill="none"/>
<path d="M756.7 457.8v-4M765.2 457.8v-4" fill="none" stroke="#0000ff" stroke-width="2"/>
<path d="M756.2 453.2h3.75M761.75 453.2h3.95" fill="none" stroke="#0000ff" stroke-width="1.600"/>
<rect x="714.7" y="465.2" width="4" height="9.6" fill="#0000ff"/>
<path d="M718.7 469.6L722.7 469.6" stroke="#0000ff" stroke-width="2.2" stroke-linecap="butt" fill="none"/>
<rect x="723.1" y="466.5" width="14.6" height="6.8" rx="0" stroke="#0000ff" stroke-width="2.2" fill="#fff"/>
<path d="M723 464L735.5 477.4" stroke="#0000ff" stroke-width="1.5" stroke-linecap="butt" fill="none"/>
<circle cx="781" cy="454.5" r="6.8" stroke="#0000ff" stroke-width="1.7" fill="none"/>
<circle cx="791.4" cy="460.3" r="6.5" stroke="#0000ff" stroke-width="1.7" fill="none"/>
<circle cx="781" cy="467" r="6.8" stroke="#0000ff" stroke-width="1.7" fill="none"/>
<path d="M777.7 450.500l3.300 3 3.300 -3M781 453.500v4.500M788.7 457l2.700 2.800 2.700 -2.800M791.4 459.800v4" fill="none" stroke="#0000ff" stroke-width="1.300"/>
<path d="M777.5 470.500l3.500 -6 3.500 6z" fill="none" stroke="#0000ff" stroke-width="1.300"/>
<path d="M777.2 456l7.500 9M784.7 456l-7.500 9" stroke="#0000ff" stroke-width="1.600"/>
<path d="M797.7 460.3L812.1 460.3" stroke="#0000ff" stroke-width="2.2" stroke-linecap="butt" fill="none"/>
<circle cx="810.1" cy="460.3" r="1.3" stroke="#0000ff" stroke-width="1.3" fill="#fff"/>
<rect x="806.9" y="436" width="6.8" height="15.6" rx="0" stroke="#0000ff" stroke-width="2.2" fill="#fff"/>
<path d="M803.7 436L816.3 449.5" stroke="#0000ff" stroke-width="1.5" stroke-linecap="butt" fill="none"/>
<rect x="805.9" y="432" width="8.800" height="2.200" fill="#0000ff"/>
<rect x="808" y="430.300" width="4.700" height="1.900" fill="#0000ff"/>
<path d="M809.9 434L809.9 436" stroke="#0000ff" stroke-width="2.2" stroke-linecap="butt" fill="none"/>
<path d="M809.9 452.6L809.9 459" stroke="#0000ff" stroke-width="2.2" stroke-linecap="butt" fill="none"/>
<path d="M781 473.5L781 518.5" stroke="#0000ff" stroke-width="2.3" stroke-linecap="butt" fill="none"/>
<path d="M781.1 518.5L781.1 539.8" stroke="#000" stroke-width="1.3" stroke-linecap="butt" fill="none"/>
<circle cx="781" cy="518.3" r="1.3" stroke="#0000ff" stroke-width="1.3" fill="#fff"/>
<path d="M782.2 518.3L790.7 518.3" stroke="#0000ff" stroke-width="2.2" stroke-linecap="butt" fill="none"/>
<rect x="790.7" y="514.5" width="14.5" height="6.8" rx="0" stroke="#0000ff" stroke-width="2.2" fill="#fff"/>
<path d="M791.7 511L805.7 525.7" stroke="#0000ff" stroke-width="1.5" stroke-linecap="butt" fill="none"/>
<path d="M806.2 518.3L810.7 518.3" stroke="#0000ff" stroke-width="2.2" stroke-linecap="butt" fill="none"/>
<rect x="809.7" y="514" width="4" height="8.8" fill="#0000ff"/>
<path d="M619.2 461.5L619.2 495L864 495" stroke="#0000ff" stroke-width="2.2" fill="none" stroke-linejoin="miter"/>
<path d="M809.9 461.5L809.9 468L864 468" stroke="#0000ff" stroke-width="2.2" fill="none" stroke-linejoin="miter"/>
<path d="M851 467.3L872 467.3" stroke="#000" stroke-width="1.1" stroke-linecap="butt" fill="none"/>
<path d="M854 494.4L872 494.4" stroke="#000" stroke-width="1.1" stroke-linecap="butt" fill="none"/>
<path d="M509.0 220.9v1.3M510.0 220.0v2.2M511.2 220.0v2.2M512.2 220.9v1.3M513.4 220.4v1.8M514.6 220.9v1.3M515.5 220.0v2.2M516.4 220.9v1.3" stroke="#000" stroke-width=".7" opacity=".85" fill="none"/>
<path d="M509 221.21h8" stroke="#000" stroke-width=".6" opacity=".45" stroke-dasharray="2 1.100 1.300 .800"/>
<path d="M840.0 220.4v1.8M841.2 220.0v2.2M843.4 220.4v1.8M844.4 220.9v1.3M845.6 220.9v1.3" stroke="#000" stroke-width=".7" opacity=".85" fill="none"/>
<path d="M840 221.21h8" stroke="#000" stroke-width=".6" opacity=".45" stroke-dasharray="2 1.100 1.300 .800"/>
<path d="M678.0 260.8v1.9M679.2 261.3v1.4M680.1 261.3v1.4M681.3 261.3v1.4M682.2 260.8v1.9M683.1 260.8v1.9M685.2 260.8v1.9M686.4 260.8v1.9M687.4 261.3v1.4M688.6 260.8v1.9M689.8 260.8v1.9M691.0 261.3v1.4M692.0 260.8v1.9M693.2 260.8v1.9" stroke="#000" stroke-width=".7" opacity=".85" fill="none"/>
<path d="M678 261.62h17" stroke="#000" stroke-width=".6" opacity=".45" stroke-dasharray="2 1.100 1.300 .800"/>
<path d="M638.0 296.0v1.6M639.2 295.5v2.1M640.4 296.0v1.6M641.4 295.5v2.1M642.3 295.5v2.1M643.3 295.0v2.6M644.5 295.0v2.6M645.4 296.0v1.6M647.6 295.0v2.6M648.6 296.0v1.6M649.5 296.0v1.6M650.7 295.0v2.6M651.6 296.0v1.6M652.8 296.0v1.6M653.7 296.0v1.6" stroke="#000" stroke-width=".7" opacity=".85" fill="none"/>
<path d="M638 296.43h17" stroke="#000" stroke-width=".6" opacity=".45" stroke-dasharray="2 1.100 1.300 .800"/>
<path d="M717.0 295.5v2.6M718.2 295.5v2.6M720.3 296.5v1.6M721.3 296.0v2.1M722.5 296.0v2.1M723.5 296.0v2.1M724.5 295.5v2.6M725.7 296.0v2.1M726.6 296.0v2.1M727.8 296.0v2.1M728.7 295.5v2.6M729.6 296.0v2.1M730.8 295.5v2.6M733.0 296.5v1.6" stroke="#000" stroke-width=".7" opacity=".85" fill="none"/>
<path d="M717 296.93h17" stroke="#000" stroke-width=".6" opacity=".45" stroke-dasharray="2 1.100 1.300 .800"/>
<path d="M532.0 292.5v1.8M533.0 292.5v1.8M533.9 292.0v2.3M535.1 292.5v1.8M536.1 292.0v2.3M537.0 292.0v2.3M537.9 292.5v1.8M538.9 292.0v2.3M539.9 292.0v2.3M540.9 292.9v1.4M541.9 292.0v2.3M542.8 292.5v1.8M543.7 292.5v1.8M545.9 292.9v1.4M546.8 292.0v2.3M547.8 292.5v1.8M550.2 292.0v2.3" stroke="#000" stroke-width=".7" opacity=".85" fill="none"/>
<path d="M532 293.265h19" stroke="#000" stroke-width=".6" opacity=".45" stroke-dasharray="2 1.100 1.300 .800"/>
<path d="M485.0 316.4v1.8M486.0 316.0v2.2M486.9 316.4v1.8M488.1 316.0v2.2M490.5 316.0v2.2M491.7 316.4v1.8M494.1 316.4v1.8M496.3 316.9v1.3M498.7 316.9v1.3" stroke="#000" stroke-width=".7" opacity=".85" fill="none"/>
<path d="M485 317.21h16" stroke="#000" stroke-width=".6" opacity=".45" stroke-dasharray="2 1.100 1.300 .800"/>
<path d="M528.0 332.0v2.3M529.2 332.0v2.3M530.2 332.5v1.8M531.2 332.0v2.3M532.2 332.5v1.8M533.4 332.0v2.3M534.3 332.9v1.4M535.5 332.0v2.3M536.7 332.5v1.8M537.7 332.9v1.4M538.7 332.5v1.8" stroke="#000" stroke-width=".7" opacity=".85" fill="none"/>
<path d="M528 333.265h12" stroke="#000" stroke-width=".6" opacity=".45" stroke-dasharray="2 1.100 1.300 .800"/>
<path d="M545.0 346.0v1.4M545.9 345.5v1.9M547.1 346.0v1.4M549.3 345.5v1.9M550.3 345.5v1.9M551.2 345.0v2.4M553.3 345.5v1.9M555.7 345.5v1.9M557.8 345.5v1.9M558.8 346.0v1.4M560.0 345.0v2.4M561.2 345.0v2.4M562.2 346.0v1.4" stroke="#000" stroke-width=".7" opacity=".85" fill="none"/>
<path d="M545 346.32h19" stroke="#000" stroke-width=".6" opacity=".45" stroke-dasharray="2 1.100 1.300 .800"/>
<path d="M559.0 380.0v1.9M560.2 380.0v1.9M561.4 380.0v1.9M562.4 379.5v2.4M563.4 380.0v1.9M564.3 380.0v1.9M566.5 380.0v1.9M567.4 379.5v2.4M569.5 380.0v1.9M570.7 380.5v1.4" stroke="#000" stroke-width=".7" opacity=".85" fill="none"/>
<path d="M559 380.82h13" stroke="#000" stroke-width=".6" opacity=".45" stroke-dasharray="2 1.100 1.300 .800"/>
<path d="M555.0 425.5v2.1M556.2 425.5v2.1M557.1 426.0v1.6M558.0 425.0v2.6M558.9 425.0v2.6M559.8 425.0v2.6M562.2 426.0v1.6M564.4 426.0v1.6M565.4 425.0v2.6M566.3 425.0v2.6M567.2 425.5v2.1M569.4 425.5v2.1" stroke="#000" stroke-width=".7" opacity=".85" fill="none"/>
<path d="M555 426.43h17" stroke="#000" stroke-width=".6" opacity=".45" stroke-dasharray="2 1.100 1.300 .800"/>
<path d="M561.0 472.3v2.5M561.9 472.3v2.5M564.3 472.3v2.5M565.2 472.8v2.0M567.6 473.3v1.5M568.5 473.3v1.5M569.5 472.3v2.5M570.4 473.3v1.5M571.4 472.3v2.5M572.4 472.8v2.0M573.4 472.8v2.0M574.3 472.8v2.0M575.3 472.8v2.0M576.5 472.8v2.0M577.7 472.8v2.0M578.9 473.3v1.5M580.1 472.8v2.0M582.3 472.3v2.5M583.2 472.3v2.5M584.1 472.3v2.5" stroke="#000" stroke-width=".7" opacity=".85" fill="none"/>
<path d="M561 473.675h24.5" stroke="#000" stroke-width=".6" opacity=".45" stroke-dasharray="2 1.100 1.300 .800"/>
<path d="M525.0 482.8v2.7M525.9 483.3v2.2M527.1 483.3v2.2M529.3 482.8v2.7M531.4 483.3v2.2M532.3 483.3v2.2M533.2 483.9v1.6M534.2 483.9v1.6M535.2 483.9v1.6M536.2 483.9v1.6M537.1 483.9v1.6" stroke="#000" stroke-width=".7" opacity=".85" fill="none"/>
<path d="M525 484.285h13" stroke="#000" stroke-width=".6" opacity=".45" stroke-dasharray="2 1.100 1.300 .800"/>
<path d="M682.0 332.2v0.9M682.9 331.6v1.5M683.8 332.2v0.9M684.7 332.2v0.9M685.6 331.6v1.5M688.0 332.2v0.9M689.0 331.6v1.5M690.2 332.2v0.9M691.2 332.2v0.9M692.4 331.6v1.5" stroke="#000" stroke-width=".7" opacity=".85" fill="none"/>
<path d="M682 332.425h11" stroke="#000" stroke-width=".6" opacity=".45" stroke-dasharray="2 1.100 1.300 .800"/>
<path d="M798.0 424.3v2.4M798.9 425.3v1.4M801.1 424.3v2.4M802.1 425.3v1.4M803.0 425.3v1.4M804.2 425.3v1.4M805.2 425.3v1.4M807.6 424.8v1.9M808.6 425.3v1.4M810.8 425.3v1.4M811.7 425.3v1.4M812.6 425.3v1.4M813.5 424.8v1.9M814.5 424.8v1.9M815.4 424.8v1.9" stroke="#000" stroke-width=".7" opacity=".85" fill="none"/>
<path d="M798 425.62h18" stroke="#000" stroke-width=".6" opacity=".45" stroke-dasharray="2 1.100 1.300 .800"/>
<path d="M787.0 473.0v1.4M787.9 472.0v2.4M790.1 473.0v1.4M791.1 473.0v1.4M792.0 473.0v1.4M794.1 473.0v1.4M795.1 472.5v1.9M796.0 472.0v2.4M797.2 473.0v1.4M798.1 473.0v1.4M799.3 473.0v1.4M800.3 472.0v2.4M801.3 472.5v1.9M802.5 472.0v2.4M804.6 472.0v2.4M805.6 473.0v1.4M807.8 472.5v1.9M809.0 472.0v2.4" stroke="#000" stroke-width=".7" opacity=".85" fill="none"/>
<path d="M787 473.32h24" stroke="#000" stroke-width=".6" opacity=".45" stroke-dasharray="2 1.100 1.300 .800"/>
<path d="M716.0 483.9v1.6M717.0 482.8v2.7M717.9 483.3v2.2M718.9 482.8v2.7M719.8 482.8v2.7M721.0 483.9v1.6M722.0 483.9v1.6M723.0 483.9v1.6M724.0 483.9v1.6M725.2 482.8v2.7M726.2 483.9v1.6" stroke="#000" stroke-width=".7" opacity=".85" fill="none"/>
<path d="M716 484.285h12" stroke="#000" stroke-width=".6" opacity=".45" stroke-dasharray="2 1.100 1.300 .800"/>
<path d="M848.0 483.0v1.6M848.9 482.0v2.6M849.8 482.0v2.6M851.9 482.0v2.6M853.1 482.5v2.1M855.2 482.5v2.1M856.4 482.0v2.6M857.6 483.0v1.6M858.5 482.0v2.6M860.6 483.0v1.6M861.8 483.0v1.6M862.7 482.0v2.6M864.9 482.5v2.1" stroke="#000" stroke-width=".7" opacity=".85" fill="none"/>
<path d="M848 483.43h18" stroke="#000" stroke-width=".6" opacity=".45" stroke-dasharray="2 1.100 1.300 .800"/>
<path d="M795.0 380.3v1.1M796.2 380.0v1.4M797.4 380.3v1.1M798.3 380.3v1.1M799.5 380.0v1.4M800.5 380.6v0.8M801.4 380.0v1.4M802.4 380.6v0.8M803.6 380.6v0.8" stroke="#000" stroke-width=".7" opacity=".85" fill="none"/>
<path d="M795 380.77h10" stroke="#000" stroke-width=".6" opacity=".45" stroke-dasharray="2 1.100 1.300 .800"/>
<path d="M800.0 293.0v1.4M800.9 292.5v1.9M801.8 292.0v2.4M804.0 292.0v2.4M804.9 293.0v1.4M805.9 292.5v1.9M806.8 292.5v1.9M809.2 293.0v1.4M810.4 293.0v1.4M811.4 292.5v1.9M812.4 292.0v2.4M813.3 292.0v2.4M814.3 292.0v2.4M815.5 293.0v1.4M816.5 293.0v1.4" stroke="#000" stroke-width=".7" opacity=".85" fill="none"/>
<path d="M800 293.32h19" stroke="#000" stroke-width=".6" opacity=".45" stroke-dasharray="2 1.100 1.300 .800"/>
<path d="M802.0 349.3v1.9M802.9 349.8v1.4M805.0 349.8v1.4M805.9 348.8v2.4M808.3 348.8v2.4M809.2 349.8v1.4M810.2 348.8v2.4M811.1 349.3v1.9M812.0 349.3v1.9M813.2 349.8v1.4M814.1 348.8v2.4M815.0 348.8v2.4M817.2 349.8v1.4M818.1 349.8v1.4M819.1 349.3v1.9M820.0 349.3v1.9" stroke="#000" stroke-width=".7" opacity=".85" fill="none"/>
<path d="M802 350.12h19" stroke="#000" stroke-width=".6" opacity=".45" stroke-dasharray="2 1.100 1.300 .800"/>
<path d="M820.0 331.0v2.3M820.9 331.5v1.8M821.8 331.5v1.8M823.0 331.9v1.4M824.2 331.5v1.8M826.6 331.9v1.4M827.5 331.5v1.8M828.4 331.0v2.3M829.3 331.9v1.4M830.2 331.0v2.3M831.1 331.0v2.3" stroke="#000" stroke-width=".7" opacity=".85" fill="none"/>
<path d="M820 332.265h12" stroke="#000" stroke-width=".6" opacity=".45" stroke-dasharray="2 1.100 1.300 .800"/>
<path d="M864.0 317.4v1.3M864.9 316.9v1.8M866.1 317.4v1.3M867.3 317.4v1.3M868.5 317.4v1.3M870.9 316.9v1.8M872.1 317.4v1.3M873.3 316.9v1.8M874.3 316.5v2.2M875.2 316.5v2.2M876.1 317.4v1.3M877.1 316.9v1.8M878.0 317.4v1.3" stroke="#000" stroke-width=".7" opacity=".85" fill="none"/>
<path d="M864 317.71h15" stroke="#000" stroke-width=".6" opacity=".45" stroke-dasharray="2 1.100 1.300 .800"/>
<path d="M1047 581H891V628" fill="none" stroke="#0000ff" stroke-width="2.200"/>
<path d="M897 581V602M905 581V628M925 581V628M937 581V628M946 581V628" fill="none" stroke="#0000ff" stroke-width="2"/>
<path d="M946 595H1047M946 615H1047M1005 595V628M1018 595V611M1032 595V611M1005 599.500H1047M1005 611H1047" fill="none" stroke="#0000ff" stroke-width="2"/>
<path d="M891 602H946" fill="none" stroke="#0000ff" stroke-width="1.600"/>
<path d="M891 585.500H946M891 589.500H946M891 593.500H946M891 597.500H946M891 606.500H946M891 610.500H946M891 614.500H946M891 619.500H946M891 623.500H946" fill="none" stroke="#000" stroke-width="1"/>
<text x="947" y="591.300" font-family="Liberation Sans" font-style="italic" font-weight="bold" font-size="6.300" fill="#111" textLength="97" lengthAdjust="spacingAndGlyphs">ПКЖТ.6662666.ДП.ГЧ.005. 15</text>
<text x="947" y="609.300" font-family="Liberation Sans" font-style="italic" font-size="11.300" fill="#222" textLength="55" lengthAdjust="spacingAndGlyphs">ОРУ-110 кВ</text>
<text x="1011.700" y="624" font-family="Liberation Sans" font-style="italic" font-weight="bold" font-size="5.800" fill="#111" textLength="25.500" lengthAdjust="spacingAndGlyphs">гр. Э - 92</text>
<path d="M1009 600v10M1012.500 600v10" stroke="#000" stroke-width="1"/>
<path d="M1010 604l1.500 2-1.500 2" fill="none" stroke="#000" stroke-width=".800"/>
<path d="M892.0 600.7v1.6M892.9 601.1v1.2M894.1 600.7v1.6M895.3 600.3v2.0" stroke="#000" stroke-width=".7" opacity=".85" fill="none"/>
<path d="M892 601.4h4.5" stroke="#000" stroke-width=".6" opacity=".45" stroke-dasharray="2 1.100 1.300 .800"/>
<path d="M898.0 600.3v2.0M899.2 600.3v2.0M901.6 601.1v1.2" stroke="#000" stroke-width=".7" opacity=".85" fill="none"/>
<path d="M898 601.4h6" stroke="#000" stroke-width=".6" opacity=".45" stroke-dasharray="2 1.100 1.300 .800"/>
<path d="M906.0 600.7v1.6M907.2 600.7v1.6M908.4 600.7v1.6M909.6 601.1v1.2M910.6 600.7v1.6M912.7 600.3v2.0M914.9 601.1v1.2M917.1 601.1v1.2M918.3 600.7v1.6M920.4 600.3v2.0M921.3 600.7v1.6M922.2 601.1v1.2" stroke="#000" stroke-width=".7" opacity=".85" fill="none"/>
<path d="M906 601.4h17" stroke="#000" stroke-width=".6" opacity=".45" stroke-dasharray="2 1.100 1.300 .800"/>
<path d="M926.0 601.1v1.2M927.2 600.3v2.0M928.2 600.3v2.0M929.1 600.3v2.0M930.3 601.1v1.2M931.5 601.1v1.2M932.7 600.7v1.6M933.7 601.1v1.2" stroke="#000" stroke-width=".7" opacity=".85" fill="none"/>
<path d="M926 601.4h9" stroke="#000" stroke-width=".6" opacity=".45" stroke-dasharray="2 1.100 1.300 .800"/>
<path d="M938.0 600.7v1.6M939.0 600.7v1.6M941.1 600.3v2.0M942.1 601.1v1.2" stroke="#000" stroke-width=".7" opacity=".85" fill="none"/>
<path d="M938 601.4h7" stroke="#000" stroke-width=".6" opacity=".45" stroke-dasharray="2 1.100 1.300 .800"/>
<path d="M892.0 604.7v1.6M892.9 605.1v1.2M895.3 604.3v2.0M896.2 604.3v2.0M897.1 605.1v1.2M898.1 604.7v1.6M899.3 604.7v1.6M900.3 605.1v1.2M901.5 604.7v1.6M902.4 605.1v1.2" stroke="#000" stroke-width=".7" opacity=".85" fill="none"/>
<path d="M892 605.4h11" stroke="#000" stroke-width=".6" opacity=".45" stroke-dasharray="2 1.100 1.300 .800"/>
<path d="M906.0 604.3v2.0M907.0 604.7v1.6M908.2 604.7v1.6M910.6 604.3v2.0M911.6 605.1v1.2M914.0 605.1v1.2M915.0 604.7v1.6M917.1 605.1v1.2M918.3 605.1v1.2M919.5 605.1v1.2M921.6 604.7v1.6" stroke="#000" stroke-width=".7" opacity=".85" fill="none"/>
<path d="M906 605.4h17" stroke="#000" stroke-width=".6" opacity=".45" stroke-dasharray="2 1.100 1.300 .800"/>
<path d="M892.0 608.3v2.0M893.2 609.1v1.2M894.1 608.3v2.0M895.0 608.7v1.6M896.2 608.7v1.6M898.3 608.3v2.0M899.2 608.3v2.0M900.1 608.7v1.6" stroke="#000" stroke-width=".7" opacity=".85" fill="none"/>
<path d="M892 609.4h9" stroke="#000" stroke-width=".6" opacity=".45" stroke-dasharray="2 1.100 1.300 .800"/>
<path d="M906.0 608.7v1.6M907.0 609.1v1.2M908.2 609.1v1.2M910.4 609.1v1.2M911.6 609.1v1.2M912.6 609.1v1.2M914.7 608.7v1.6M915.7 609.1v1.2M918.1 609.1v1.2M919.3 609.1v1.2M920.2 608.3v2.0M921.2 608.7v1.6M922.4 609.1v1.2" stroke="#000" stroke-width=".7" opacity=".85" fill="none"/>
<path d="M906 609.4h18" stroke="#000" stroke-width=".6" opacity=".45" stroke-dasharray="2 1.100 1.300 .800"/>
<path d="M892.0 612.9v1.6M893.0 613.3v1.2M894.0 612.5v2.0M895.2 612.5v2.0M896.2 612.9v1.6M897.1 613.3v1.2M898.3 612.5v2.0M899.5 613.3v1.2M900.7 612.5v2.0" stroke="#000" stroke-width=".7" opacity=".85" fill="none"/>
<path d="M892 613.6h10" stroke="#000" stroke-width=".6" opacity=".45" stroke-dasharray="2 1.100 1.300 .800"/>
<path d="M892.0 622.1v1.2M894.4 622.1v1.2M895.4 622.1v1.2M896.4 622.1v1.2M897.6 621.7v1.6M898.8 621.3v2.0M900.0 622.1v1.2M900.9 621.7v1.6M901.9 621.3v2.0" stroke="#000" stroke-width=".7" opacity=".85" fill="none"/>
<path d="M892 622.4h11" stroke="#000" stroke-width=".6" opacity=".45" stroke-dasharray="2 1.100 1.300 .800"/>
<path d="M906.0 621.3v2.0M907.2 621.7v1.6M908.1 621.7v1.6M909.0 622.1v1.2M911.1 621.7v1.6M912.0 621.3v2.0M913.0 621.7v1.6M914.0 622.1v1.2M915.0 622.1v1.2M916.0 621.7v1.6M917.2 621.7v1.6M918.1 622.1v1.2M919.3 621.3v2.0M920.2 621.7v1.6M922.3 621.3v2.0" stroke="#000" stroke-width=".7" opacity=".85" fill="none"/>
<path d="M906 622.4h18" stroke="#000" stroke-width=".6" opacity=".45" stroke-dasharray="2 1.100 1.300 .800"/>
<path d="M892.0 625.7v1.6M893.2 626.1v1.2M894.2 625.3v2.0M895.2 626.1v1.2M897.3 625.3v2.0" stroke="#000" stroke-width=".7" opacity=".85" fill="none"/>
<path d="M892 626.4h6" stroke="#000" stroke-width=".6" opacity=".45" stroke-dasharray="2 1.100 1.300 .800"/>
<path d="M1006.0 596.9v1.6M1007.2 596.9v1.6M1008.1 596.5v2.0M1009.3 597.3v1.2M1010.3 597.3v1.2M1011.3 597.3v1.2M1013.4 596.9v1.6M1014.4 596.9v1.6" stroke="#000" stroke-width=".7" opacity=".85" fill="none"/>
<path d="M1006 597.6h9" stroke="#000" stroke-width=".6" opacity=".45" stroke-dasharray="2 1.100 1.300 .800"/>
<path d="M1020.0 596.5v2.0M1020.9 596.5v2.0M1022.1 596.9v1.6M1023.3 597.3v1.2M1024.3 596.9v1.6M1025.5 597.3v1.2M1027.7 597.3v1.2" stroke="#000" stroke-width=".7" opacity=".85" fill="none"/>
<path d="M1020 597.6h10" stroke="#000" stroke-width=".6" opacity=".45" stroke-dasharray="2 1.100 1.300 .800"/>
<path d="M1033.0 596.9v1.6M1034.2 597.3v1.2M1036.3 596.9v1.6M1037.5 596.5v2.0M1038.7 596.9v1.6M1041.1 596.9v1.6M1042.0 597.3v1.2M1042.9 596.5v2.0M1044.1 597.3v1.2M1045.3 596.5v2.0" stroke="#000" stroke-width=".7" opacity=".85" fill="none"/>
<path d="M1033 597.6h13" stroke="#000" stroke-width=".6" opacity=".45" stroke-dasharray="2 1.100 1.300 .800"/>
<path d="M1006.0 612.4v1.6M1007.2 612.8v1.2M1008.2 612.4v1.6M1009.4 612.0v2.0M1011.8 612.4v1.6M1012.8 612.8v1.2M1013.8 612.8v1.2M1015.9 612.8v1.2" stroke="#000" stroke-width=".7" opacity=".85" fill="none"/>
<path d="M1006 613.1h11" stroke="#000" stroke-width=".6" opacity=".45" stroke-dasharray="2 1.100 1.300 .800"/>
<path d="M1022.0 612.0v2.0M1023.2 612.0v2.0M1024.1 612.4v1.6M1025.1 612.4v1.6M1027.5 612.0v2.0M1028.5 612.8v1.2M1029.7 612.0v2.0M1030.6 612.4v1.6M1031.5 612.4v1.6M1032.4 612.8v1.2M1034.5 612.0v2.0" stroke="#000" stroke-width=".7" opacity=".85" fill="none"/>
<path d="M1022 613.1h14" stroke="#000" stroke-width=".6" opacity=".45" stroke-dasharray="2 1.100 1.300 .800"/>
<path d="M955.0 629.0v2.0M956.2 629.0v2.0M957.2 629.4v1.6M958.2 629.0v2.0M959.4 629.8v1.2M961.5 629.4v1.6M963.7 629.8v1.2M964.6 629.4v1.6M966.8 629.4v1.6M969.2 629.0v2.0M970.1 629.4v1.6M971.3 629.8v1.2M972.3 629.0v2.0" stroke="#000" stroke-width=".7" opacity=".85" fill="none"/>
<path d="M955 630.1h18" stroke="#000" stroke-width=".6" opacity=".45" stroke-dasharray="2 1.100 1.300 .800"/>
<path d="M1014.0 629.4v1.6M1016.4 629.4v1.6M1017.4 629.0v2.0M1018.6 629.4v1.6M1019.5 629.4v1.6M1021.9 629.8v1.2M1023.1 629.8v1.2M1024.3 629.8v1.2M1026.7 629.0v2.0M1027.6 629.4v1.6M1028.5 629.0v2.0M1029.4 629.0v2.0M1030.6 629.8v1.2M1031.8 629.4v1.6M1032.8 629.0v2.0" stroke="#000" stroke-width=".7" opacity=".85" fill="none"/>
<path d="M1014 630.1h20" stroke="#000" stroke-width=".6" opacity=".45" stroke-dasharray="2 1.100 1.300 .800"/>
</svg>
</div><!-- /app -->
<!-- ===== taskbar ===== -->
<div id="taskbar" style="position:absolute;left:0;top:728px;width:1365px;height:40px;overflow:hidden;background:
 radial-gradient(ellipse 70px 14px at 350px 8px,rgba(150,160,120,.55),rgba(150,160,120,0) 100%),
 radial-gradient(ellipse 60px 16px at 430px 14px,rgba(190,170,130,.55),rgba(190,170,130,0) 100%),
 radial-gradient(ellipse 80px 14px at 470px 34px,rgba(170,175,120,.5),rgba(170,175,120,0) 100%),
 radial-gradient(ellipse 120px 20px at 650px 14px,rgba(165,190,175,.6),rgba(165,190,175,0) 100%),
 radial-gradient(ellipse 70px 12px at 720px 28px,rgba(190,180,150,.4),rgba(190,180,150,0) 100%),
 radial-gradient(ellipse 120px 22px at 880px 26px,rgba(200,200,165,.6),rgba(200,200,165,0) 100%),
 radial-gradient(ellipse 110px 16px at 1000px 10px,rgba(208,212,185,.7),rgba(208,212,185,0) 100%),
 radial-gradient(ellipse 100px 18px at 1070px 30px,rgba(196,200,168,.55),rgba(196,200,168,0) 100%),
 radial-gradient(ellipse 100px 20px at 1300px 12px,rgba(190,198,160,.5),rgba(190,198,160,0) 100%),
 repeating-linear-gradient(115deg,rgba(255,255,255,0) 0,rgba(255,255,255,.05) 14px,rgba(120,120,90,.05) 30px,rgba(255,255,255,0) 46px),
 linear-gradient(to right,#a1a793 0%,#a2a892 22%,#abaf8e 25%,#b8b091 30%,#afb38f 35%,#a9b79f 39%,#a8bba8 45%,#a9bba7 58%,#b6c1a8 62%,#c3c8aa 67%,#c5caac 78%,#b2bca3 82%,#a9b59e 86%,#a8b49d 100%)">
  <!-- start -->
  <svg class="ico" style="left:10px;top:6px" width="28" height="27" viewBox="0 0 28 27"><path d="M0 4.200L11.300 2.500V12.600H0zM12.700 2.300L27.500 0V12.600H12.700zM0 14H11.300V24.200L0 22.500zM12.700 14H27.500V26.500L12.700 24.400z" fill="#fff"/></svg>
  <!-- explorer button -->
  <div class="abs" style="left:50px;top:0;width:60px;height:40px;background:rgba(200,205,195,.42);border:1px solid rgba(90,100,85,.75);box-shadow:inset 0 0 0 1px rgba(230,235,225,.45)"></div>
  <svg class="ico" style="left:63px;top:6px" width="34" height="32" viewBox="0 0 34 32">
    <defs><linearGradient id="fg" x1="0" y1="0" x2="0" y2="1"><stop offset="0" stop-color="#fdf0b4"/><stop offset="1" stop-color="#f3d677"/></linearGradient>
    <linearGradient id="fb" x1="0" y1="0" x2="0" y2="1"><stop offset="0" stop-color="#8fd4f6"/><stop offset="1" stop-color="#3e9ede"/></linearGradient></defs>
    <path d="M2 3q0-1.500 1.500-1.500h11.500l1.500 2h13q1.500 0 1.500 1.500v5h-29z" fill="#f0cf70" stroke="#c9a545" stroke-width=".8"/>
    <rect x="4.500" y="2.300" width="9" height="2.300" fill="#fff"/><rect x="4.500" y="2.200" width="3.200" height="2.400" fill="#1fc025"/>
    <rect x="12" y="4.600" width="9" height="2.300" fill="#fff"/><rect x="12" y="4.500" width="3.200" height="2.400" fill="#e02a1e"/>
    <rect x="20" y="6.800" width="9" height="2.300" fill="#fff"/><rect x="20" y="6.700" width="3.200" height="2.400" fill="#1e90f0"/>
    <path d="M1.500 9.500h17.500l1.500-2h10.500q1.500 0 1.500 1.500v16.500q0 1.500-1.500 1.500h-28q-1.500 0-1.500-1.500z" fill="url(#fg)" stroke="#d0aa4a" stroke-width=".8"/>
    <path d="M5 30.500v-11q0-2 2-2h19q2 0 2 2v11h-6v-7.500h-11v7.500z" fill="url(#fb)" stroke="#2f86c8" stroke-width=".9"/>
    <path d="M6 21h21" stroke="#d6f0fd" stroke-width="1.600" opacity=".8"/>
    <path d="M8 12v12M3 19h11M5 15l7 8M12 15l-7 8" stroke="#fff" stroke-width=".6" opacity=".8"/>
  </svg>
  <!-- chrome button -->
  <div class="abs" style="left:112px;top:0;width:60px;height:40px;background:rgba(200,205,195,.42);border:1px solid rgba(90,100,85,.75);box-shadow:inset 0 0 0 1px rgba(230,235,225,.45)"></div>
  <svg class="ico" style="left:127px;top:5px" width="30" height="30" viewBox="-15 -15 30 30">
    <circle r="14.800" fill="#fff"/>
    <path d="M0 0L-12.820 -7.400A14.800 14.800 0 0 1 12.820 -7.400z" fill="#db4437"/>
    <path d="M-12.820 -7.400A14.800 14.800 0 0 1 12.820 -7.400H0z" fill="#db4437"/>
    <path d="M12.820 -7.400A14.800 14.800 0 0 1 0 14.800L0 0z" fill="#ffcd40"/>
    <path d="M0 14.800A14.800 14.800 0 0 1 -12.820 -7.400L0 0z" fill="#0f9d58"/>
    <path d="M0 -6.800H12.900A14.800 14.800 0 0 1 1 14.760L6 3.400z" fill="#ffcd40"/>
    <path d="M5.890 3.400L-.600 14.780A14.800 14.800 0 0 1 -12.820 -7.400L-5.890 3.400z" fill="#0f9d58"/>
    <path d="M-5.890 3.400L-12.820 -7.400A14.800 14.800 0 0 1 12.900 -6.800H0z" fill="#db4437"/>
    <circle r="6.800" fill="#fff"/><circle r="5.400" fill="#4285f4"/>
  </svg>
  <!-- aimp -->
  <svg class="ico" style="left:189px;top:5px" width="30" height="30" viewBox="-15 -15 30 30">
    <defs><radialGradient id="ag" cx="50%" cy="35%" r="70%"><stop offset="0" stop-color="#ffb43c"/><stop offset="1" stop-color="#f58a10"/></radialGradient></defs>
    <circle r="14.400" fill="#151515"/><circle r="11.200" fill="url(#ag)"/>
    <path d="M-.500 -8.500L8.500 6H-7.500zM-.300 -2.200L-3.300 3.300H3.300z" fill="#111" fill-rule="evenodd"/>
    <path d="M.200 -2.600L3.800 3.300H-.200z" fill="#f8e020"/>
  </svg>
  <!-- kompas button -->
  <div class="abs" style="left:236px;top:0;width:60px;height:40px;background:rgba(222,226,216,.62);border:1px solid rgba(70,80,65,.85);box-shadow:inset 0 0 0 1px rgba(255,255,255,.9)"></div>
  <svg class="ico" style="left:250px;top:3px" width="32" height="33" viewBox="-16 -16 32 33">
    <defs><linearGradient id="kb" x1="0" y1="-15" x2="0" y2="15" gradientUnits="userSpaceOnUse"><stop offset="0" stop-color="#3fa0f4"/><stop offset="1" stop-color="#1868c4"/></linearGradient></defs>
    <ellipse cx="1" cy="15.300" rx="9" ry="1.100" fill="#6a705a" opacity=".35"/>
    <path d="M11.700 6.800A13.500 13.500 0 1 0 8.300 10.700" fill="none" stroke="url(#kb)" stroke-width="3"/>
    <path d="M-9 -9H8.800L6.500 -6.400H-6V7.500L-9 10z" fill="url(#kb)"/>
    <path d="M7.800 -7.500L-3.500 -1" stroke="url(#kb)" stroke-width="2.800"/>
    <path d="M-2.600 .500L9.400 10.300" stroke="url(#kb)" stroke-width="3"/>
    <path d="M2.400 -2.900L12.500 6.200" stroke="url(#kb)" stroke-width="2.800"/>
    <path d="M-2.800 1L-7.300 6.300" stroke="url(#kb)" stroke-width="2.400"/>
  </svg>
  <!-- tray -->
  <svg class="ico" style="left:1150px;top:10px" width="95" height="22" viewBox="1150 738 95 22">
    <path d="M1153.200 751.800l4.400-4.600 4.400 4.600z" fill="#fff"/>
    <path d="M1175.500 742v3.500M1179 742v3.500" stroke="#fff" stroke-width="1.400"/>
    <path d="M1174.300 745.500h6v3q0 1.500-1.500 1.500h-3q-1.500 0-1.500-1.500z" fill="#fff"/>
    <path d="M1177.300 750v6.300" stroke="#fff" stroke-width="1.600"/>
    <rect x="1182.200" y="743.500" width="7" height="12.300" rx="1" fill="none" stroke="#fff" stroke-width="1.300"/>
    <rect x="1184" y="741.800" width="3.400" height="1.700" fill="#fff"/>
    <rect x="1183.800" y="745.300" width="3.800" height="8.800" fill="#fff" opacity=".9"/>
    <path d="M1198.500 753v1.600h2V753zM1201.700 751v3.600h2V751zM1204.900 748.500v6.100h2v-6.100zM1208.100 746v8.600h2V746zM1211.300 743v11.600h2.200V743z" fill="#fff"/>
    <path d="M1222.500 746.300h2.500l4-4.300v13.700l-4-4.300h-2.500z" fill="none" stroke="#fff" stroke-width="1.200" stroke-linejoin="round"/>
    <path d="M1231 746.200q1.600 2.600 0 5.400M1233.300 744.300q3 4.500 0 9.200M1235.600 742.500q4.200 6.400 0 12.800" fill="none" stroke="#fff" stroke-width="1.100"/>
  </svg>
  <div class="abs sx" style="left:1253.500px;top:15px;font-size:12px;color:#fff;transform:scaleX(.9)">РУС</div>
  <div class="abs sx" style="left:1306.500px;top:6px;font-size:12px;color:#fff;transform:scaleX(.875)">19:00</div>
  <div class="abs sx" style="left:1292.500px;top:23px;font-size:12px;color:#fff;transform:scaleX(.895)">16.06.2016</div>
</div>
<div>
</div>
</body>
</html>
